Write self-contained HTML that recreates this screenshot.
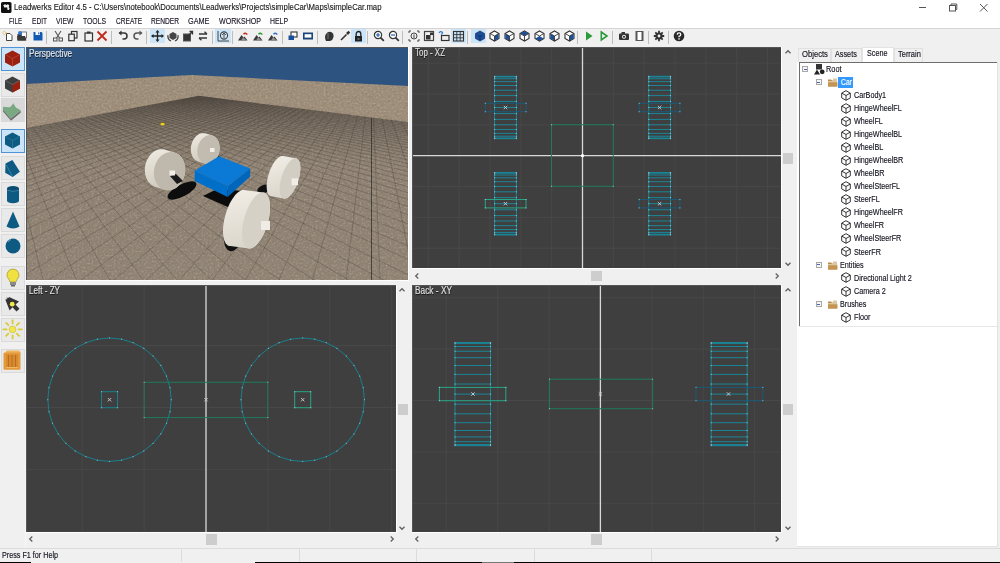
<!DOCTYPE html>
<html><head><meta charset="utf-8">
<style>
*{box-sizing:border-box}
html,body{margin:0;padding:0}
body{width:1000px;height:563px;position:relative;overflow:hidden;background:#f0f0f0;font-family:"Liberation Sans",sans-serif;color:#000}
.a{position:absolute}
.t{white-space:pre;transform-origin:0 0;-webkit-text-stroke:0.15px currentColor}
svg{display:block;overflow:hidden}
</style></head>
<body>
<div class="a" style="left:0;top:0;width:1000px;height:28px;background:#fff"></div>
<div class="a" style="left:0;top:28px;width:1000px;height:1px;background:#d5d5d5"></div>
<svg class="a" style="left:0;top:1px" width="13" height="13" viewBox="0 0 13 13">
<rect x="1" y="1" width="10.5" height="11" rx="1.6" fill="#111"/>
<path d="M3.2 4.2 L5 3.2 L6.6 4 L7.8 3.3 L9.2 4.3 L8.8 6.2 L9.6 7.6 L8.6 9.2 L7.2 8.6 L7.4 6.8 L6.2 6.2 L4.6 6.8 Z" fill="#f2f2f2"/>
</svg>
<div class="a" style="left:919px;top:7px;width:7px;height:1px;background:#555"></div>
<svg class="a" style="left:948px;top:3px" width="10" height="9" viewBox="0 0 10 9">
<rect x="1.5" y="2.5" width="6" height="5.5" fill="none" stroke="#555" stroke-width="1"/>
<path d="M3 2.5 V1 H8.8 V6.5 H7.5" fill="none" stroke="#555" stroke-width="1"/></svg>
<svg class="a" style="left:979px;top:3px" width="10" height="10" viewBox="0 0 10 10">
<path d="M1 1 L8.5 8.5 M8.5 1 L1 8.5" stroke="#555" stroke-width="1"/></svg>
<div class="a" style="left:0;top:29px;width:1000px;height:18px;background:#f0f0f0"></div>
<div class="a" style="left:46px;top:31px;width:1px;height:13px;background:#bdbdbd"></div>
<div class="a" style="left:111px;top:31px;width:1px;height:13px;background:#bdbdbd"></div>
<div class="a" style="left:146px;top:31px;width:1px;height:13px;background:#bdbdbd"></div>
<div class="a" style="left:212px;top:31px;width:1px;height:13px;background:#bdbdbd"></div>
<div class="a" style="left:232px;top:31px;width:1px;height:13px;background:#bdbdbd"></div>
<div class="a" style="left:282px;top:31px;width:1px;height:13px;background:#bdbdbd"></div>
<div class="a" style="left:317px;top:31px;width:1px;height:13px;background:#bdbdbd"></div>
<div class="a" style="left:367px;top:31px;width:1px;height:13px;background:#bdbdbd"></div>
<div class="a" style="left:402px;top:31px;width:1px;height:13px;background:#bdbdbd"></div>
<div class="a" style="left:467px;top:31px;width:1px;height:13px;background:#bdbdbd"></div>
<div class="a" style="left:577px;top:31px;width:1px;height:13px;background:#bdbdbd"></div>
<div class="a" style="left:612px;top:31px;width:1px;height:13px;background:#bdbdbd"></div>
<div class="a" style="left:648px;top:31px;width:1px;height:13px;background:#bdbdbd"></div>
<div class="a" style="left:668px;top:31px;width:1px;height:13px;background:#bdbdbd"></div>
<div class="a" style="left:150px;top:29px;width:15px;height:14px;background:#cce4f7"></div>
<div class="a" style="left:215px;top:29px;width:16px;height:14px;background:#cce4f7"></div>
<div class="a" style="left:351px;top:29px;width:15px;height:14px;background:#cce4f7"></div>
<div class="a" style="left:451px;top:29px;width:15px;height:14px;background:#cce4f7"></div>
<div class="a" style="left:471px;top:29px;width:15px;height:14px;background:#cce4f7"></div>
<svg class="a" style="left:2px;top:30px" width="12" height="12" viewBox="0 0 12 12"><path d="M4.5 3.5 H8 L10 5.5 V10.5 H4.5 Z" fill="#fff" stroke="#444" stroke-width="1"/><circle cx="2.5" cy="3" r="1.6" fill="none" stroke="#e8a040" stroke-width="1" stroke-dasharray="1 1"/></svg>
<svg class="a" style="left:16px;top:30px" width="12" height="12" viewBox="0 0 12 12"><rect x="1.5" y="4" width="8" height="6.5" fill="#333"/><rect x="5.5" y="2" width="5" height="6" fill="#fff" stroke="#555" stroke-width="0.8"/><path d="M1 6 H9 L10.5 10.5 H1.5 Z" fill="#3a3a3a"/><circle cx="4" cy="3" r="2" fill="#2f7ad0"/></svg>
<svg class="a" style="left:32px;top:30px" width="12" height="12" viewBox="0 0 12 12"><path d="M1.5 2 H9.5 L10.5 3 V10.5 H1.5 Z" fill="#1258b0"/><rect x="3.5" y="2" width="4.5" height="3" fill="#fff"/><rect x="6.2" y="2.4" width="1.2" height="2" fill="#1258b0"/></svg>
<svg class="a" style="left:52px;top:30px" width="12" height="12" viewBox="0 0 12 12"><path d="M3 1 L7.5 8 M9 1 L4.5 8" stroke="#555" stroke-width="1.1"/><rect x="1.5" y="8" width="3.5" height="3" fill="none" stroke="#555"/><rect x="7" y="8" width="3.5" height="3" fill="none" stroke="#555"/></svg>
<svg class="a" style="left:67px;top:30px" width="12" height="12" viewBox="0 0 12 12"><rect x="4.5" y="1.5" width="5.5" height="6.5" fill="none" stroke="#333" stroke-width="1.2"/><rect x="1.8" y="4.2" width="5.5" height="6.5" fill="#f0f0f0" stroke="#333" stroke-width="1.2"/></svg>
<svg class="a" style="left:83px;top:30px" width="12" height="12" viewBox="0 0 12 12"><rect x="2" y="3" width="7.5" height="8" fill="none" stroke="#333" stroke-width="1.2"/><rect x="4" y="1.5" width="3.5" height="2" fill="#333"/></svg>
<svg class="a" style="left:96px;top:30px" width="12" height="12" viewBox="0 0 12 12"><path d="M1.5 1.5 L10.5 10.5 M10.5 1.5 L1.5 10.5" stroke="#c0281a" stroke-width="1.8"/></svg>
<svg class="a" style="left:117px;top:30px" width="12" height="12" viewBox="0 0 12 12"><path d="M2.5 3 H7 A3 3 0 0 1 7 9 H5.5" fill="none" stroke="#333" stroke-width="1.5"/><path d="M1.5 3 L4.5 0.5 V5.5 Z" fill="#333"/></svg>
<svg class="a" style="left:132px;top:30px" width="12" height="12" viewBox="0 0 12 12"><path d="M9.5 3 H5 A3 3 0 0 0 5 9 H6.5" fill="none" stroke="#555" stroke-width="1.5"/><path d="M10.5 3 L7.5 0.5 V5.5 Z" fill="#555"/></svg>
<svg class="a" style="left:151px;top:30px" width="13" height="12" viewBox="0 0 13 12"><path d="M6.5 1 V11 M1.5 6 H11.5" stroke="#222" stroke-width="1.3"/><path d="M6.5 0 L4.5 2.5 H8.5 Z M6.5 12 L4.5 9.5 H8.5 Z M0 6 L2.5 4 V8 Z M13 6 L10.5 4 V8 Z" fill="#222"/></svg>
<svg class="a" style="left:167px;top:30px" width="12" height="12" viewBox="0 0 12 12"><path d="M6 2 L9.5 4 V8 L6 10 L2.5 8 V4 Z" fill="#444"/><path d="M1 5 A5.5 5.5 0 0 0 4 11 M11 5 A5.5 5.5 0 0 1 8 11" fill="none" stroke="#444" stroke-width="1.2"/></svg>
<svg class="a" style="left:182px;top:30px" width="12" height="12" viewBox="0 0 12 12"><rect x="1.5" y="4" width="7" height="7" fill="#333" stroke="#555"/><path d="M6 6 L10.5 1.5 M7.5 1.5 H10.5 V4.5" stroke="#333" stroke-width="1.3" fill="none"/></svg>
<svg class="a" style="left:197px;top:30px" width="12" height="12" viewBox="0 0 12 12"><path d="M2 4 H10 M10 8 H2" stroke="#333" stroke-width="1.3"/><path d="M10 4 L7.5 1.8 M2 8 L4.5 10.2" stroke="#333" stroke-width="1.3"/></svg>
<svg class="a" style="left:216px;top:30px" width="14" height="12" viewBox="0 0 14 12"><path d="M2 1 V11 H13" fill="none" stroke="#444" stroke-width="1"/><circle cx="8" cy="5.5" r="3.6" fill="none" stroke="#444" stroke-width="1.1"/><path d="M8 3 V8 M6 5 L8 3 L10 5" fill="none" stroke="#444" stroke-width="0.9"/></svg>
<svg class="a" style="left:237px;top:30px" width="12" height="12" viewBox="0 0 12 12"><path d="M1 10.5 L4.5 5 L6.5 7.5 L7.5 6.5 L10.5 10.5 Z" fill="#3a3a3a"/><path d="M4 10.5 L6.2 7 L9.5 10.5 Z" fill="#909090"/><path d="M6.5 4.2 Q8 2.5 9.8 4" fill="none" stroke="#d02818" stroke-width="1.4"/><path d="M10.8 4.6 L9.2 5 L9.8 3 Z" fill="#d02818"/></svg>
<svg class="a" style="left:252px;top:30px" width="12" height="12" viewBox="0 0 12 12"><path d="M1 10.5 L4.5 5 L6.5 7.5 L7.5 6.5 L10.5 10.5 Z" fill="#3a3a3a"/><path d="M4 10.5 L6.2 7 L9.5 10.5 Z" fill="#909090"/><path d="M6.5 4.2 Q8 2.5 9.8 4" fill="none" stroke="#2a9a2a" stroke-width="1.4"/><path d="M10.8 4.6 L9.2 5 L9.8 3 Z" fill="#2a9a2a"/></svg>
<svg class="a" style="left:267px;top:30px" width="12" height="12" viewBox="0 0 12 12"><path d="M1 10.5 L4.5 5 L6.5 7.5 L7.5 6.5 L10.5 10.5 Z" fill="#3a3a3a"/><path d="M4 10.5 L6.2 7 L9.5 10.5 Z" fill="#909090"/><path d="M6.5 4.2 Q8 2.5 9.8 4" fill="none" stroke="#2f70c0" stroke-width="1.4"/><path d="M10.8 4.6 L9.2 5 L9.8 3 Z" fill="#2f70c0"/></svg>
<svg class="a" style="left:287px;top:30px" width="12" height="12" viewBox="0 0 12 12"><rect x="4" y="2" width="6" height="5" fill="#fff" stroke="#333" stroke-width="1.1"/><rect x="1.5" y="5.5" width="5.5" height="4.5" fill="#1c4f9a"/></svg>
<svg class="a" style="left:302px;top:30px" width="12" height="12" viewBox="0 0 12 12"><rect x="1" y="2.5" width="10" height="7" fill="#1a4378"/><rect x="2.6" y="4.2" width="6.8" height="3.4" fill="#fff"/></svg>
<svg class="a" style="left:323px;top:30px" width="12" height="12" viewBox="0 0 12 12"><path d="M3 11 Q1 7 3 4 Q5 1 8 2 Q11 3 10.5 7 Q10 10 7 11 Z" fill="#333"/><path d="M5 3 V9" stroke="#777" stroke-width="1"/></svg>
<svg class="a" style="left:339px;top:30px" width="12" height="12" viewBox="0 0 12 12"><path d="M2 10 L7.5 4.5" stroke="#333" stroke-width="1.6"/><path d="M7 3 L9.5 0.8 L11.2 2.5 L9 5 Z" fill="#333"/></svg>
<svg class="a" style="left:352px;top:30px" width="13" height="12" viewBox="0 0 13 12"><path d="M4.2 6 V3.8 A2.3 2.3 0 0 1 8.8 3.8 V6" fill="none" stroke="#222" stroke-width="1.3"/><rect x="3" y="6" width="7" height="5.5" fill="#222"/><rect x="5.5" y="8" width="2" height="2" fill="#666"/></svg>
<svg class="a" style="left:373px;top:30px" width="12" height="12" viewBox="0 0 12 12"><circle cx="5" cy="5" r="3.6" fill="#fff" stroke="#333" stroke-width="1.2"/><path d="M7.6 7.6 L10.8 10.8" stroke="#333" stroke-width="1.8"/><path d="M3 5 H7 M5 3 V7" stroke="#1c5fb0" stroke-width="1.2"/></svg>
<svg class="a" style="left:388px;top:30px" width="12" height="12" viewBox="0 0 12 12"><circle cx="5" cy="5" r="3.6" fill="#fff" stroke="#333" stroke-width="1.2"/><path d="M7.6 7.6 L10.8 10.8" stroke="#333" stroke-width="1.8"/><path d="M3 5 H7" stroke="#1c5fb0" stroke-width="1.2"/></svg>
<svg class="a" style="left:408px;top:30px" width="12" height="12" viewBox="0 0 12 12"><path d="M1 3 V1 H3 M9 1 H11 V3 M11 9 V11 H9 M3 11 H1 V9" fill="none" stroke="#444" stroke-width="1"/><circle cx="6" cy="6" r="3" fill="none" stroke="#444"/><path d="M6 4.5 V8" stroke="#444"/></svg>
<svg class="a" style="left:423px;top:30px" width="12" height="12" viewBox="0 0 12 12"><rect x="1.5" y="1.5" width="9" height="9" fill="none" stroke="#444" stroke-width="1.2"/><rect x="3" y="5" width="4.5" height="4.5" fill="#333"/><rect x="7" y="2.5" width="3" height="2.5" fill="#333"/></svg>
<svg class="a" style="left:438px;top:30px" width="12" height="12" viewBox="0 0 12 12"><rect x="3.5" y="5.5" width="7.5" height="5" fill="none" stroke="#333" stroke-width="1.2"/><path d="M1 3 Q2.5 0.5 4.5 2.5 Q4.5 4 3 4.5" fill="none" stroke="#2f7ad0" stroke-width="1.2"/></svg>
<svg class="a" style="left:452px;top:30px" width="13" height="12" viewBox="0 0 13 12"><rect x="1.5" y="1.5" width="10" height="9.5" fill="none" stroke="#333" stroke-width="1.1"/><path d="M4.8 1.5 V11 M8.2 1.5 V11 M1.5 4.6 H11.5 M1.5 7.8 H11.5" stroke="#333" stroke-width="0.9"/></svg>
<svg class="a" style="left:474px;top:30px" width="12" height="12" viewBox="0 0 12 12"><path d="M6 1 L10.5 3.5 V8.5 L6 11 L1.5 8.5 V3.5 Z" fill="#1c4f9a" stroke="#1a3a70" stroke-width="0.8"/><path d="M6 6.5 V10 M3.5 5 L6 6.5 L8.5 5" stroke="#0c2a5a" stroke-width="0.8" fill="none"/></svg>
<svg class="a" style="left:489px;top:30px" width="11" height="12" viewBox="0 0 11 12"><path d="M5.5 1 L10 3.5 V8.5 L5.5 11 L1 8.5 V3.5 Z" fill="#fff" stroke="#333" stroke-width="1.1"/><path d="M9.6 3.8 L5.7 6.1 V10.6 L9.6 8.4 Z" fill="#1c4f9a"/><path d="M1.2 3.6 L5.5 6 L9.8 3.6 M5.5 6 V11" fill="none" stroke="#333" stroke-width="0.9"/></svg>
<svg class="a" style="left:504px;top:30px" width="11" height="12" viewBox="0 0 11 12"><path d="M5.5 1 L10 3.5 V8.5 L5.5 11 L1 8.5 V3.5 Z" fill="#fff" stroke="#333" stroke-width="1.1"/><path d="M1.4 3.8 L5.3 6.1 V10.6 L1.4 8.4 Z" fill="#1c4f9a"/><path d="M1.2 3.6 L5.5 6 L9.8 3.6 M5.5 6 V11" fill="none" stroke="#333" stroke-width="0.9"/></svg>
<svg class="a" style="left:519px;top:30px" width="11" height="12" viewBox="0 0 11 12"><path d="M5.5 1 L10 3.5 V8.5 L5.5 11 L1 8.5 V3.5 Z" fill="#fff" stroke="#333" stroke-width="1.1"/><path d="M5.5 1.3 L9.6 3.6 L5.5 6 L1.4 3.6 Z" fill="#1c4f9a"/><path d="M1.2 3.6 L5.5 6 L9.8 3.6 M5.5 6 V11" fill="none" stroke="#333" stroke-width="0.9"/></svg>
<svg class="a" style="left:534px;top:30px" width="11" height="12" viewBox="0 0 11 12"><path d="M5.5 1 L10 3.5 V8.5 L5.5 11 L1 8.5 V3.5 Z" fill="#fff" stroke="#333" stroke-width="1.1"/><path d="M1.2 3.6 L5.5 6 L9.8 3.6 M5.5 6 V11" fill="none" stroke="#333" stroke-width="0.9"/></svg>
<svg class="a" style="left:534px;top:30px" width="11" height="12" viewBox="0 0 11 12"><path d="M1.4 8.4 L5.5 6.1 L9.6 8.4 L5.5 10.7 Z" fill="#1c4f9a"/></svg>
<svg class="a" style="left:549px;top:30px" width="11" height="12" viewBox="0 0 11 12"><path d="M5.5 1 L10 3.5 V8.5 L5.5 11 L1 8.5 V3.5 Z" fill="#fff" stroke="#333" stroke-width="1.1"/><path d="M1.4 3.8 L5.3 6.1 V10.6 L1.4 8.4 Z" fill="#1c4f9a"/><path d="M1.2 3.6 L5.5 6 L9.8 3.6 M5.5 6 V11" fill="none" stroke="#333" stroke-width="0.9"/></svg>
<svg class="a" style="left:564px;top:30px" width="11" height="12" viewBox="0 0 11 12"><path d="M5.5 1 L10 3.5 V8.5 L5.5 11 L1 8.5 V3.5 Z" fill="#fff" stroke="#333" stroke-width="1.1"/><path d="M9.6 3.8 L5.7 6.1 V10.6 L9.6 8.4 Z" fill="#1c4f9a"/><path d="M1.2 3.6 L5.5 6 L9.8 3.6 M5.5 6 V11" fill="none" stroke="#333" stroke-width="0.9"/></svg>
<svg class="a" style="left:584px;top:30px" width="10" height="12" viewBox="0 0 10 12"><path d="M2 1.5 L8.5 6 L2 10.5 Z" fill="#2a9a3a"/></svg>
<svg class="a" style="left:599px;top:30px" width="10" height="12" viewBox="0 0 10 12"><path d="M2.3 2 L8 6 L2.3 10 Z" fill="none" stroke="#2a9a3a" stroke-width="1.6"/></svg>
<svg class="a" style="left:618px;top:30px" width="12" height="12" viewBox="0 0 12 12"><rect x="1" y="3.5" width="10" height="6.5" rx="1" fill="#333"/><rect x="3.5" y="2" width="3.5" height="2" fill="#333"/><circle cx="6" cy="6.8" r="2" fill="#f0f0f0"/><circle cx="6" cy="6.8" r="1.1" fill="#333"/></svg>
<svg class="a" style="left:634px;top:30px" width="12" height="12" viewBox="0 0 12 12"><rect x="1.5" y="1" width="8" height="10" fill="#555"/><rect x="3.5" y="2" width="4" height="8" fill="#fff"/></svg>
<svg class="a" style="left:653px;top:30px" width="12" height="12" viewBox="0 0 12 12"><circle cx="6" cy="6" r="3.6" fill="#333"/><path d="M6 0.8 V11.2 M0.8 6 H11.2 M2.3 2.3 L9.7 9.7 M9.7 2.3 L2.3 9.7" stroke="#333" stroke-width="1.8"/><circle cx="6" cy="6" r="1.4" fill="#f0f0f0"/></svg>
<svg class="a" style="left:673px;top:30px" width="12" height="12" viewBox="0 0 12 12"><circle cx="6" cy="6" r="5.3" fill="#2a2a2a"/><path d="M4.2 4.6 Q4.3 2.8 6 2.8 Q7.8 2.8 7.8 4.4 Q7.8 5.6 6 6.3 V7.3" fill="none" stroke="#fff" stroke-width="1.3"/><rect x="5.3" y="8.2" width="1.4" height="1.4" fill="#fff"/></svg>
<div class="a" style="left:25px;top:47px;width:1px;height:501px;background:#f6f6f6"></div>
<div class="a" style="left:1px;top:47px;width:24px;height:24px;background:#cce4f7;border:1px solid #4f93d6"></div>
<div class="a" style="left:1px;top:73px;width:24px;height:24px;background:#e9e9e9;border:1px solid #dadada"></div>
<div class="a" style="left:1px;top:98px;width:24px;height:24px;background:#d9d9d9;border:1px solid #d9d9d9"></div>
<div class="a" style="left:1px;top:129px;width:24px;height:24px;background:#cce4f7;border:1px solid #4f93d6"></div>
<div class="a" style="left:1px;top:156px;width:24px;height:24px;background:#e9e9e9;border:1px solid #dadada"></div>
<div class="a" style="left:1px;top:182px;width:24px;height:24px;background:#e9e9e9;border:1px solid #dadada"></div>
<div class="a" style="left:1px;top:208px;width:24px;height:24px;background:#e9e9e9;border:1px solid #dadada"></div>
<div class="a" style="left:1px;top:234px;width:24px;height:24px;background:#e9e9e9;border:1px solid #dadada"></div>
<div class="a" style="left:1px;top:266px;width:24px;height:24px;background:#e9e9e9;border:1px solid #dadada"></div>
<div class="a" style="left:1px;top:292px;width:24px;height:24px;background:#e9e9e9;border:1px solid #dadada"></div>
<div class="a" style="left:1px;top:318px;width:24px;height:24px;background:#e9e9e9;border:1px solid #dadada"></div>
<div class="a" style="left:1px;top:349px;width:24px;height:24px;background:#e9e9e9;border:1px solid #dadada"></div>
<svg class="a" style="left:1px;top:47px" width="24" height="24" viewBox="0 0 24 24"><path d="M11.5 3.5 L19 7.5 V15.5 L11.5 19.5 L4 15.5 V7.5 Z" fill="#9b2010"/><path d="M4.5 7.7 L11.5 11.5 L18.5 7.7 M11.5 11.5 V19" fill="none" stroke="#c05a48" stroke-width="0.6"/></svg>
<svg class="a" style="left:1px;top:73px" width="24" height="24" viewBox="0 0 24 24"><path d="M11.5 3.5 L19 7.5 V15.5 L11.5 19.5 L4 15.5 V7.5 Z" fill="#3e3e3e"/><path d="M11.5 11.5 L19 7.5 V15.5 L11.5 19.5 Z" fill="#9b2010"/><path d="M4.5 7.7 L11.5 11.5 L18.5 7.7" fill="none" stroke="#777" stroke-width="0.6"/></svg>
<svg class="a" style="left:1px;top:98px" width="24" height="24" viewBox="0 0 24 24"><path d="M2 11 L9.7 20.5 L19.6 12.4 L19.8 14.5 L10 22.8 L2 13.5 Z" fill="#6e6e6e"/><path d="M2 8.8 Q6 9.5 9 9.2 Q11 7.5 12.4 5.3 Q14 9 15.5 10 Q18 11 19.6 12.4 L9.7 20.5 L2 12 Z" fill="#7aa883"/></svg>
<svg class="a" style="left:1px;top:129px" width="24" height="24" viewBox="0 0 24 24"><path d="M11.5 3.5 L19 7.5 V15.5 L11.5 19.5 L4 15.5 V7.5 Z" fill="#0d5a82"/><path d="M4.5 7.7 L11.5 11.5 L18.5 7.7 M11.5 11.5 V19" fill="none" stroke="#3b7fa5" stroke-width="0.6"/></svg>
<svg class="a" style="left:1px;top:156px" width="24" height="24" viewBox="0 0 24 24"><path d="M11.4 4 L18.9 15.7 L11.7 20.9 L4.2 16.7 L4.5 7.5 Z" fill="#0d5a82"/><path d="M5.3 9 L11.3 20" stroke="#4b8fb0" stroke-width="0.7"/></svg>
<svg class="a" style="left:1px;top:182px" width="24" height="24" viewBox="0 0 24 24"><ellipse cx="12" cy="18.8" rx="6" ry="2.4" fill="#0d5a82"/><rect x="6" y="6.5" width="12" height="12.3" fill="#0d5a82"/><ellipse cx="12" cy="6.5" rx="6" ry="2.6" fill="#0a4d70"/><path d="M6.3 8.2 Q12 10.5 17.7 8.2" fill="none" stroke="#5a9ac0" stroke-width="0.6"/></svg>
<svg class="a" style="left:1px;top:208px" width="24" height="24" viewBox="0 0 24 24"><path d="M12 3.5 L18.5 18.5 Q12 22.5 5.5 18.5 Z" fill="#0d5a82"/></svg>
<svg class="a" style="left:1px;top:234px" width="24" height="24" viewBox="0 0 24 24"><circle cx="12" cy="12" r="7.5" fill="#0d5a82"/><path d="M7 8 Q8 6 10 5.5" stroke="#8ab8d8" stroke-width="0.8" fill="none"/></svg>
<svg class="a" style="left:1px;top:266px" width="24" height="24" viewBox="0 0 24 24"><path d="M12 3 A6 6 0 0 1 16 13.5 L15 16 H9 L8 13.5 A6 6 0 0 1 12 3 Z" fill="#f0e040" stroke="#9a8a20" stroke-width="0.6"/><rect x="9" y="16" width="6" height="3" fill="#8a8a8a"/><rect x="10" y="19" width="4" height="1.5" fill="#666"/></svg>
<svg class="a" style="left:1px;top:292px" width="24" height="24" viewBox="0 0 24 24"><path d="M4.5 8 Q5 4.5 8 5 L18 9.6 L14.5 12.5 L18.5 16.8 L15.5 19.6 L11.5 15.2 L8.6 18.5 Z" fill="#333"/><circle cx="11.2" cy="12.2" r="2.4" fill="#f2e64a"/><path d="M5 7.5 Q5.5 5.2 7.8 5.4" stroke="#e8e8e8" stroke-width="0.9" fill="none"/></svg>
<svg class="a" style="left:1px;top:318px" width="24" height="24" viewBox="0 0 24 24"><circle cx="11.6" cy="11.4" r="3.4" fill="#f2e64a" stroke="#b0a030" stroke-width="0.4"/><line x1="17.6" y1="11.4" x2="20.8" y2="11.4" stroke="#d8cc3a" stroke-width="1.8" stroke-linecap="round"/><line x1="15.8" y1="15.6" x2="18.1" y2="17.9" stroke="#d8cc3a" stroke-width="1.8" stroke-linecap="round"/><line x1="11.6" y1="17.4" x2="11.6" y2="20.6" stroke="#d8cc3a" stroke-width="1.8" stroke-linecap="round"/><line x1="7.4" y1="15.6" x2="5.1" y2="17.9" stroke="#d8cc3a" stroke-width="1.8" stroke-linecap="round"/><line x1="5.6" y1="11.4" x2="2.4" y2="11.4" stroke="#d8cc3a" stroke-width="1.8" stroke-linecap="round"/><line x1="7.4" y1="7.2" x2="5.1" y2="4.9" stroke="#d8cc3a" stroke-width="1.8" stroke-linecap="round"/><line x1="11.6" y1="5.4" x2="11.6" y2="2.2" stroke="#d8cc3a" stroke-width="1.8" stroke-linecap="round"/><line x1="15.8" y1="7.2" x2="18.1" y2="4.9" stroke="#d8cc3a" stroke-width="1.8" stroke-linecap="round"/></svg>
<svg class="a" style="left:1px;top:349px" width="24" height="24" viewBox="0 0 24 24"><path d="M4.5 3.5 L6 1.8 H18 L19.5 3.5 V19.5 Q19.5 20.8 18.2 20.8 H3.8 Q2.5 20.8 2.5 19.5 V4.5 Q2.5 3.5 4.5 3.5 Z" fill="#e39a3c"/><path d="M4.5 3.5 L6 1.8 H18 L19.5 3.5 Z" fill="#f0b55a"/><rect x="5" y="5.5" width="12" height="13" fill="#d88a2e"/><path d="M7.5 6 V18 M11 6 V18 M14.5 6 V18" stroke="#b86e1e" stroke-width="1"/><path d="M5 18.5 H17" stroke="#f5c070" stroke-width="0.8"/></svg>
<svg class="a" style="left:26px;top:47px" width="382" height="233" viewBox="0 0 382 233"><rect width="382" height="233" fill="#2d5381"/><linearGradient id="fdk" x1="0" y1="0" x2="0" y2="1"><stop offset="0" stop-color="#2a2520" stop-opacity="0.3"/><stop offset="1" stop-color="#2a2520" stop-opacity="0"/></linearGradient><linearGradient id="trd" x1="0" y1="0" x2="0.3" y2="1"><stop offset="0" stop-color="#f0ece3"/><stop offset="1" stop-color="#cfc9bd"/></linearGradient><linearGradient id="trd2" x1="0" y1="0" x2="0.2" y2="1"><stop offset="0" stop-color="#f2eee6"/><stop offset="1" stop-color="#dcd7cd"/></linearGradient><polygon points="0.0,37.0 166.0,28.0 382.0,39.0 382.0,233.0 0.0,233.0" fill="#9f8e79" /><polygon points="0.0,81.0 173.0,48.8 382.0,75.0 382.0,233.0 0.0,233.0" fill="#908373" /><clipPath id="flc"><polygon points="0.0,81.0 173.0,48.8 382.0,75.0 382.0,233.0 0.0,233.0"/></clipPath><filter id="nzd" x="0" y="0" width="100%" height="100%"><feTurbulence type="fractalNoise" baseFrequency="0.45" numOctaves="3" seed="7"/><feColorMatrix type="matrix" values="0 0 0 0 0.2  0 0 0 0 0.17  0 0 0 0 0.14  2.2 0 0 0 -1.0"/></filter><filter id="nzl" x="0" y="0" width="100%" height="100%"><feTurbulence type="fractalNoise" baseFrequency="0.5" numOctaves="3" seed="11"/><feColorMatrix type="matrix" values="0 0 0 0 0.75  0 0 0 0 0.71  0 0 0 0 0.64  -2.2 0 0 0 1.2"/></filter><clipPath id="gnd"><polygon points="0,37 166,28 382,39 382,233 0,233"/></clipPath><g clip-path="url(#gnd)"><rect x="0" y="26" width="382" height="207" filter="url(#nzd)" opacity="0.5"/><rect x="0" y="26" width="382" height="207" filter="url(#nzl)" opacity="0.3"/></g><g clip-path="url(#flc)"><line x1="173.00" y1="48.80" x2="-8279.50" y2="1607.00" stroke="#2a2622" stroke-opacity="0.32" stroke-width="0.7"/><line x1="173.00" y1="48.80" x2="10379.70" y2="1317.90" stroke="#2a2622" stroke-opacity="0.32" stroke-width="0.7"/><line x1="175.53" y1="49.11" x2="-8051.02" y2="1603.46" stroke="#2a2622" stroke-opacity="0.32" stroke-width="0.7"/><line x1="170.90" y1="49.19" x2="10151.22" y2="1321.44" stroke="#2a2622" stroke-opacity="0.32" stroke-width="0.7"/><line x1="178.12" y1="49.44" x2="-7822.54" y2="1599.92" stroke="#2a2622" stroke-opacity="0.32" stroke-width="0.7"/><line x1="168.76" y1="49.58" x2="9922.74" y2="1324.98" stroke="#2a2622" stroke-opacity="0.32" stroke-width="0.7"/><line x1="180.78" y1="49.77" x2="-7594.06" y2="1596.38" stroke="#2a2622" stroke-opacity="0.32" stroke-width="0.7"/><line x1="166.56" y1="49.99" x2="9694.26" y2="1328.52" stroke="#2a2622" stroke-opacity="0.32" stroke-width="0.7"/><line x1="183.50" y1="50.11" x2="-7365.58" y2="1592.84" stroke="#2a2622" stroke-opacity="0.32" stroke-width="0.7"/><line x1="164.30" y1="50.40" x2="9465.78" y2="1332.06" stroke="#2a2622" stroke-opacity="0.32" stroke-width="0.7"/><line x1="186.30" y1="50.45" x2="-7137.10" y2="1589.30" stroke="#2a2622" stroke-opacity="0.32" stroke-width="0.7"/><line x1="161.99" y1="50.83" x2="9237.30" y2="1335.60" stroke="#2a2622" stroke-opacity="0.32" stroke-width="0.7"/><line x1="189.16" y1="50.81" x2="-6908.62" y2="1585.76" stroke="#2a2622" stroke-opacity="0.32" stroke-width="0.7"/><line x1="159.62" y1="51.27" x2="9008.82" y2="1339.14" stroke="#2a2622" stroke-opacity="0.32" stroke-width="0.7"/><line x1="192.10" y1="51.18" x2="-6680.14" y2="1582.22" stroke="#2a2622" stroke-opacity="0.32" stroke-width="0.7"/><line x1="157.18" y1="51.72" x2="8780.34" y2="1342.68" stroke="#2a2622" stroke-opacity="0.32" stroke-width="0.7"/><line x1="195.12" y1="51.55" x2="-6451.66" y2="1578.68" stroke="#2a2622" stroke-opacity="0.32" stroke-width="0.7"/><line x1="154.68" y1="52.18" x2="8551.86" y2="1346.22" stroke="#2a2622" stroke-opacity="0.32" stroke-width="0.7"/><line x1="198.22" y1="51.94" x2="-6223.18" y2="1575.14" stroke="#2a2622" stroke-opacity="0.32" stroke-width="0.7"/><line x1="152.11" y1="52.65" x2="8323.38" y2="1349.76" stroke="#2a2622" stroke-opacity="0.32" stroke-width="0.7"/><line x1="201.40" y1="52.33" x2="-5994.70" y2="1571.60" stroke="#2a2622" stroke-opacity="0.32" stroke-width="0.7"/><line x1="149.48" y1="53.14" x2="8094.90" y2="1353.30" stroke="#2a2622" stroke-opacity="0.32" stroke-width="0.7"/><line x1="204.68" y1="52.74" x2="-5766.22" y2="1568.06" stroke="#2a2622" stroke-opacity="0.32" stroke-width="0.7"/><line x1="146.77" y1="53.64" x2="7866.42" y2="1356.84" stroke="#2a2622" stroke-opacity="0.32" stroke-width="0.7"/><line x1="208.04" y1="53.16" x2="-5537.74" y2="1564.52" stroke="#2a2622" stroke-opacity="0.32" stroke-width="0.7"/><line x1="143.98" y1="54.15" x2="7637.94" y2="1360.38" stroke="#2a2622" stroke-opacity="0.32" stroke-width="0.7"/><line x1="211.50" y1="53.59" x2="-5309.26" y2="1560.98" stroke="#2a2622" stroke-opacity="0.32" stroke-width="0.7"/><line x1="141.12" y1="54.68" x2="7409.46" y2="1363.92" stroke="#2a2622" stroke-opacity="0.32" stroke-width="0.7"/><line x1="215.06" y1="54.03" x2="-5080.78" y2="1557.44" stroke="#2a2622" stroke-opacity="0.32" stroke-width="0.7"/><line x1="138.17" y1="55.22" x2="7180.98" y2="1367.46" stroke="#2a2622" stroke-opacity="0.32" stroke-width="0.7"/><line x1="218.72" y1="54.49" x2="-4852.30" y2="1553.90" stroke="#2a2622" stroke-opacity="0.32" stroke-width="0.7"/><line x1="135.13" y1="55.78" x2="6952.50" y2="1371.00" stroke="#2a2622" stroke-opacity="0.32" stroke-width="0.7"/><line x1="222.50" y1="54.95" x2="-4623.82" y2="1550.36" stroke="#2a2622" stroke-opacity="0.32" stroke-width="0.7"/><line x1="132.01" y1="56.36" x2="6724.02" y2="1374.54" stroke="#2a2622" stroke-opacity="0.32" stroke-width="0.7"/><line x1="226.38" y1="55.44" x2="-4395.34" y2="1546.82" stroke="#2a2622" stroke-opacity="0.32" stroke-width="0.7"/><line x1="128.79" y1="56.95" x2="6495.54" y2="1378.08" stroke="#2a2622" stroke-opacity="0.32" stroke-width="0.7"/><line x1="230.39" y1="55.94" x2="-4166.86" y2="1543.28" stroke="#2a2622" stroke-opacity="0.32" stroke-width="0.7"/><line x1="125.47" y1="57.56" x2="6267.06" y2="1381.62" stroke="#2a2622" stroke-opacity="0.32" stroke-width="0.7"/><line x1="234.52" y1="56.45" x2="-3938.38" y2="1539.74" stroke="#2a2622" stroke-opacity="0.32" stroke-width="0.7"/><line x1="122.05" y1="58.19" x2="6038.58" y2="1385.16" stroke="#2a2622" stroke-opacity="0.32" stroke-width="0.7"/><line x1="238.78" y1="56.98" x2="-3709.90" y2="1536.20" stroke="#2a2622" stroke-opacity="0.32" stroke-width="0.7"/><line x1="118.53" y1="58.84" x2="5810.10" y2="1388.70" stroke="#2a2622" stroke-opacity="0.32" stroke-width="0.7"/><line x1="243.18" y1="57.53" x2="-3481.42" y2="1532.66" stroke="#2a2622" stroke-opacity="0.32" stroke-width="0.7"/><line x1="114.89" y1="59.51" x2="5581.62" y2="1392.24" stroke="#2a2622" stroke-opacity="0.32" stroke-width="0.7"/><line x1="247.72" y1="58.09" x2="-3252.94" y2="1529.12" stroke="#2a2622" stroke-opacity="0.32" stroke-width="0.7"/><line x1="111.12" y1="60.21" x2="5353.14" y2="1395.78" stroke="#2a2622" stroke-opacity="0.32" stroke-width="0.7"/><line x1="252.41" y1="58.67" x2="-3024.46" y2="1525.58" stroke="#2a2622" stroke-opacity="0.32" stroke-width="0.7"/><line x1="107.24" y1="60.92" x2="5124.66" y2="1399.32" stroke="#2a2622" stroke-opacity="0.32" stroke-width="0.7"/><line x1="257.26" y1="59.28" x2="-2795.98" y2="1522.04" stroke="#2a2622" stroke-opacity="0.32" stroke-width="0.7"/><line x1="103.22" y1="61.66" x2="4896.18" y2="1402.86" stroke="#2a2622" stroke-opacity="0.32" stroke-width="0.7"/><line x1="262.27" y1="59.90" x2="-2567.50" y2="1518.50" stroke="#2a2622" stroke-opacity="0.32" stroke-width="0.7"/><line x1="99.07" y1="62.43" x2="4667.70" y2="1406.40" stroke="#2a2622" stroke-opacity="0.32" stroke-width="0.7"/><line x1="267.46" y1="60.55" x2="-2339.02" y2="1514.96" stroke="#2a2622" stroke-opacity="0.32" stroke-width="0.7"/><line x1="94.77" y1="63.22" x2="4439.22" y2="1409.94" stroke="#2a2622" stroke-opacity="0.32" stroke-width="0.7"/><line x1="272.84" y1="61.21" x2="-2110.54" y2="1511.42" stroke="#2a2622" stroke-opacity="0.32" stroke-width="0.7"/><line x1="90.32" y1="64.04" x2="4210.74" y2="1413.48" stroke="#2a2622" stroke-opacity="0.32" stroke-width="0.7"/><line x1="278.40" y1="61.91" x2="-1882.06" y2="1507.88" stroke="#2a2622" stroke-opacity="0.32" stroke-width="0.7"/><line x1="85.71" y1="64.89" x2="3982.26" y2="1417.02" stroke="#2a2622" stroke-opacity="0.32" stroke-width="0.7"/><line x1="284.18" y1="62.62" x2="-1653.58" y2="1504.34" stroke="#2a2622" stroke-opacity="0.32" stroke-width="0.7"/><line x1="80.93" y1="65.77" x2="3753.78" y2="1420.56" stroke="#2a2622" stroke-opacity="0.32" stroke-width="0.7"/><line x1="290.17" y1="63.37" x2="-1425.10" y2="1500.80" stroke="#2a2622" stroke-opacity="0.32" stroke-width="0.7"/><line x1="75.97" y1="66.69" x2="3525.30" y2="1424.10" stroke="#2a2622" stroke-opacity="0.32" stroke-width="0.7"/><line x1="296.39" y1="64.14" x2="-1196.62" y2="1497.26" stroke="#2a2622" stroke-opacity="0.32" stroke-width="0.7"/><line x1="70.82" y1="67.64" x2="3296.82" y2="1427.64" stroke="#2a2622" stroke-opacity="0.32" stroke-width="0.7"/><line x1="302.85" y1="64.95" x2="-968.14" y2="1493.72" stroke="#2a2622" stroke-opacity="0.32" stroke-width="0.7"/><line x1="65.47" y1="68.62" x2="3068.34" y2="1431.18" stroke="#2a2622" stroke-opacity="0.32" stroke-width="0.7"/><line x1="309.57" y1="65.78" x2="-739.66" y2="1490.18" stroke="#2a2622" stroke-opacity="0.32" stroke-width="0.7"/><line x1="59.90" y1="69.65" x2="2839.86" y2="1434.72" stroke="#2a2622" stroke-opacity="0.32" stroke-width="0.7"/><line x1="316.56" y1="66.65" x2="-511.18" y2="1486.64" stroke="#2a2622" stroke-opacity="0.32" stroke-width="0.7"/><line x1="54.11" y1="70.72" x2="2611.38" y2="1438.26" stroke="#2a2622" stroke-opacity="0.32" stroke-width="0.7"/><line x1="323.84" y1="67.56" x2="-282.70" y2="1483.10" stroke="#2a2622" stroke-opacity="0.32" stroke-width="0.7"/><line x1="48.09" y1="71.83" x2="2382.90" y2="1441.80" stroke="#2a2622" stroke-opacity="0.32" stroke-width="0.7"/><line x1="331.43" y1="68.50" x2="-54.22" y2="1479.56" stroke="#2a2622" stroke-opacity="0.32" stroke-width="0.7"/><line x1="41.80" y1="72.99" x2="2154.42" y2="1445.34" stroke="#2a2622" stroke-opacity="0.32" stroke-width="0.7"/><line x1="339.34" y1="69.48" x2="174.26" y2="1476.02" stroke="#2a2622" stroke-opacity="0.32" stroke-width="0.7"/><line x1="35.25" y1="74.19" x2="1925.94" y2="1448.88" stroke="#2a2622" stroke-opacity="0.32" stroke-width="0.7"/><line x1="347.60" y1="70.51" x2="402.74" y2="1472.48" stroke="#2a2622" stroke-opacity="0.32" stroke-width="0.7"/><line x1="28.40" y1="75.46" x2="1697.46" y2="1452.42" stroke="#2a2622" stroke-opacity="0.32" stroke-width="0.7"/><line x1="356.24" y1="71.58" x2="631.22" y2="1468.94" stroke="#2a2622" stroke-opacity="0.32" stroke-width="0.7"/><line x1="21.25" y1="76.77" x2="1468.98" y2="1455.96" stroke="#2a2622" stroke-opacity="0.32" stroke-width="0.7"/><line x1="365.28" y1="72.71" x2="859.70" y2="1465.40" stroke="#2a2622" stroke-opacity="0.32" stroke-width="0.7"/><line x1="13.77" y1="78.15" x2="1240.50" y2="1459.50" stroke="#2a2622" stroke-opacity="0.32" stroke-width="0.7"/><line x1="374.74" y1="73.88" x2="1088.18" y2="1461.86" stroke="#2a2622" stroke-opacity="0.32" stroke-width="0.7"/><line x1="5.93" y1="79.60" x2="1012.02" y2="1463.04" stroke="#2a2622" stroke-opacity="0.32" stroke-width="0.7"/><line x1="384.66" y1="75.12" x2="1316.66" y2="1458.32" stroke="#2a2622" stroke-opacity="0.32" stroke-width="0.7"/><line x1="-2.28" y1="81.11" x2="783.54" y2="1466.58" stroke="#2a2622" stroke-opacity="0.32" stroke-width="0.7"/><line x1="395.07" y1="76.41" x2="1545.14" y2="1454.78" stroke="#2a2622" stroke-opacity="0.32" stroke-width="0.7"/><line x1="-10.90" y1="82.70" x2="555.06" y2="1470.12" stroke="#2a2622" stroke-opacity="0.32" stroke-width="0.7"/><line x1="406.01" y1="77.77" x2="1773.62" y2="1451.24" stroke="#2a2622" stroke-opacity="0.32" stroke-width="0.7"/><line x1="-19.97" y1="84.37" x2="326.58" y2="1473.66" stroke="#2a2622" stroke-opacity="0.32" stroke-width="0.7"/><line x1="417.53" y1="79.20" x2="2002.10" y2="1447.70" stroke="#2a2622" stroke-opacity="0.32" stroke-width="0.7"/><line x1="-29.50" y1="86.13" x2="98.10" y2="1477.20" stroke="#2a2622" stroke-opacity="0.32" stroke-width="0.7"/><line x1="429.66" y1="80.71" x2="2230.58" y2="1444.16" stroke="#2a2622" stroke-opacity="0.32" stroke-width="0.7"/><line x1="-39.54" y1="87.98" x2="-130.38" y2="1480.74" stroke="#2a2622" stroke-opacity="0.32" stroke-width="0.7"/><line x1="442.45" y1="82.30" x2="2459.06" y2="1440.62" stroke="#2a2622" stroke-opacity="0.32" stroke-width="0.7"/><line x1="-50.14" y1="89.94" x2="-358.86" y2="1484.28" stroke="#2a2622" stroke-opacity="0.32" stroke-width="0.7"/><line x1="455.97" y1="83.98" x2="2687.54" y2="1437.08" stroke="#2a2622" stroke-opacity="0.32" stroke-width="0.7"/><line x1="-61.34" y1="92.00" x2="-587.34" y2="1487.82" stroke="#2a2622" stroke-opacity="0.32" stroke-width="0.7"/><line x1="470.28" y1="85.76" x2="2916.02" y2="1433.54" stroke="#2a2622" stroke-opacity="0.32" stroke-width="0.7"/><line x1="-73.19" y1="94.18" x2="-815.82" y2="1491.36" stroke="#2a2622" stroke-opacity="0.32" stroke-width="0.7"/><line x1="485.45" y1="87.65" x2="3144.50" y2="1430.00" stroke="#2a2622" stroke-opacity="0.32" stroke-width="0.7"/><line x1="-85.75" y1="96.50" x2="-1044.30" y2="1494.90" stroke="#2a2622" stroke-opacity="0.32" stroke-width="0.7"/><line x1="501.56" y1="89.65" x2="3372.98" y2="1426.46" stroke="#2a2622" stroke-opacity="0.32" stroke-width="0.7"/><line x1="-99.09" y1="98.96" x2="-1272.78" y2="1498.44" stroke="#2a2622" stroke-opacity="0.32" stroke-width="0.7"/><line x1="518.69" y1="91.78" x2="3601.46" y2="1422.92" stroke="#2a2622" stroke-opacity="0.32" stroke-width="0.7"/><line x1="-113.28" y1="101.57" x2="-1501.26" y2="1501.98" stroke="#2a2622" stroke-opacity="0.32" stroke-width="0.7"/><line x1="536.95" y1="94.05" x2="3829.94" y2="1419.38" stroke="#2a2622" stroke-opacity="0.32" stroke-width="0.7"/><line x1="-128.40" y1="104.36" x2="-1729.74" y2="1505.52" stroke="#2a2622" stroke-opacity="0.32" stroke-width="0.7"/><line x1="556.46" y1="96.48" x2="4058.42" y2="1415.84" stroke="#2a2622" stroke-opacity="0.32" stroke-width="0.7"/><line x1="-144.56" y1="107.34" x2="-1958.22" y2="1509.06" stroke="#2a2622" stroke-opacity="0.32" stroke-width="0.7"/><line x1="577.35" y1="99.08" x2="4286.90" y2="1412.30" stroke="#2a2622" stroke-opacity="0.32" stroke-width="0.7"/><line x1="-161.85" y1="110.53" x2="-2186.70" y2="1512.60" stroke="#2a2622" stroke-opacity="0.32" stroke-width="0.7"/><line x1="599.76" y1="101.86" x2="4515.38" y2="1408.76" stroke="#2a2622" stroke-opacity="0.32" stroke-width="0.7"/><line x1="-180.41" y1="113.95" x2="-2415.18" y2="1516.14" stroke="#2a2622" stroke-opacity="0.32" stroke-width="0.7"/><line x1="623.88" y1="104.86" x2="4743.86" y2="1405.22" stroke="#2a2622" stroke-opacity="0.32" stroke-width="0.7"/><line x1="-200.39" y1="117.63" x2="-2643.66" y2="1519.68" stroke="#2a2622" stroke-opacity="0.32" stroke-width="0.7"/><line x1="649.90" y1="108.10" x2="4972.34" y2="1401.68" stroke="#2a2622" stroke-opacity="0.32" stroke-width="0.7"/><line x1="-221.93" y1="121.61" x2="-2872.14" y2="1523.22" stroke="#2a2622" stroke-opacity="0.32" stroke-width="0.7"/><line x1="678.06" y1="111.60" x2="5200.82" y2="1398.14" stroke="#2a2622" stroke-opacity="0.32" stroke-width="0.7"/><line x1="-245.25" y1="125.90" x2="-3100.62" y2="1526.76" stroke="#2a2622" stroke-opacity="0.32" stroke-width="0.7"/><line x1="708.63" y1="115.40" x2="5429.30" y2="1394.60" stroke="#2a2622" stroke-opacity="0.32" stroke-width="0.7"/><line x1="-270.57" y1="130.57" x2="-3329.10" y2="1530.30" stroke="#2a2622" stroke-opacity="0.32" stroke-width="0.7"/><line x1="741.94" y1="119.54" x2="5657.78" y2="1391.06" stroke="#2a2622" stroke-opacity="0.32" stroke-width="0.7"/><line x1="-298.16" y1="135.66" x2="-3557.58" y2="1533.84" stroke="#2a2622" stroke-opacity="0.32" stroke-width="0.7"/><line x1="778.37" y1="124.07" x2="5886.26" y2="1387.52" stroke="#2a2622" stroke-opacity="0.32" stroke-width="0.7"/><line x1="-328.33" y1="141.22" x2="-3786.06" y2="1537.38" stroke="#2a2622" stroke-opacity="0.32" stroke-width="0.7"/><line x1="818.39" y1="129.05" x2="6114.74" y2="1383.98" stroke="#2a2622" stroke-opacity="0.32" stroke-width="0.7"/><line x1="-361.47" y1="147.33" x2="-4014.54" y2="1540.92" stroke="#2a2622" stroke-opacity="0.32" stroke-width="0.7"/><line x1="862.54" y1="134.54" x2="6343.22" y2="1380.44" stroke="#2a2622" stroke-opacity="0.32" stroke-width="0.7"/><line x1="-398.03" y1="154.07" x2="-4243.02" y2="1544.46" stroke="#2a2622" stroke-opacity="0.32" stroke-width="0.7"/><line x1="911.52" y1="140.63" x2="6571.70" y2="1376.90" stroke="#2a2622" stroke-opacity="0.32" stroke-width="0.7"/><line x1="-438.59" y1="161.55" x2="-4471.50" y2="1548.00" stroke="#2a2622" stroke-opacity="0.32" stroke-width="0.7"/><line x1="966.14" y1="147.42" x2="6800.18" y2="1373.36" stroke="#2a2622" stroke-opacity="0.32" stroke-width="0.7"/><line x1="-483.83" y1="169.88" x2="-4699.98" y2="1551.54" stroke="#2a2622" stroke-opacity="0.32" stroke-width="0.7"/><line x1="1027.46" y1="155.04" x2="7028.66" y2="1369.82" stroke="#2a2622" stroke-opacity="0.32" stroke-width="0.7"/><line x1="-534.60" y1="179.24" x2="-4928.46" y2="1555.08" stroke="#2a2622" stroke-opacity="0.32" stroke-width="0.7"/><line x1="1096.77" y1="163.66" x2="7257.14" y2="1366.28" stroke="#2a2622" stroke-opacity="0.32" stroke-width="0.7"/><line x1="-592.00" y1="189.83" x2="-5156.94" y2="1558.62" stroke="#2a2622" stroke-opacity="0.32" stroke-width="0.7"/><line x1="1175.75" y1="173.48" x2="7485.62" y2="1362.74" stroke="#2a2622" stroke-opacity="0.32" stroke-width="0.7"/><line x1="-657.41" y1="201.88" x2="-5385.42" y2="1562.16" stroke="#2a2622" stroke-opacity="0.32" stroke-width="0.7"/><line x1="1266.57" y1="184.77" x2="7714.10" y2="1359.20" stroke="#2a2622" stroke-opacity="0.32" stroke-width="0.7"/><line x1="-732.62" y1="215.75" x2="-5613.90" y2="1565.70" stroke="#2a2622" stroke-opacity="0.32" stroke-width="0.7"/><line x1="1372.13" y1="197.90" x2="7942.58" y2="1355.66" stroke="#2a2622" stroke-opacity="0.32" stroke-width="0.7"/><line x1="-820.04" y1="231.86" x2="-5842.38" y2="1569.24" stroke="#2a2622" stroke-opacity="0.32" stroke-width="0.7"/><line x1="1496.32" y1="213.34" x2="8171.06" y2="1352.12" stroke="#2a2622" stroke-opacity="0.32" stroke-width="0.7"/><line x1="-922.88" y1="250.82" x2="-6070.86" y2="1572.78" stroke="#2a2622" stroke-opacity="0.32" stroke-width="0.7"/><line x1="1644.54" y1="231.77" x2="8399.54" y2="1348.58" stroke="#2a2622" stroke-opacity="0.32" stroke-width="0.7"/><line x1="-1045.63" y1="273.45" x2="-6299.34" y2="1576.32" stroke="#2a2622" stroke-opacity="0.32" stroke-width="0.7"/><line x1="1824.52" y1="254.15" x2="8628.02" y2="1345.04" stroke="#2a2622" stroke-opacity="0.32" stroke-width="0.7"/><line x1="-1194.68" y1="300.93" x2="-6527.82" y2="1579.86" stroke="#2a2622" stroke-opacity="0.32" stroke-width="0.7"/><line x1="2047.70" y1="281.90" x2="8856.50" y2="1341.50" stroke="#2a2622" stroke-opacity="0.32" stroke-width="0.7"/><line x1="-1379.50" y1="335.00" x2="-6756.30" y2="1583.40" stroke="#2a2622" stroke-opacity="0.32" stroke-width="0.7"/><line x1="2331.75" y1="317.22" x2="9084.98" y2="1337.96" stroke="#2a2622" stroke-opacity="0.32" stroke-width="0.7"/><line x1="-1614.73" y1="378.36" x2="-6984.78" y2="1586.94" stroke="#2a2622" stroke-opacity="0.32" stroke-width="0.7"/><line x1="2705.49" y1="363.69" x2="9313.46" y2="1334.42" stroke="#2a2622" stroke-opacity="0.32" stroke-width="0.7"/><line x1="-1924.24" y1="435.42" x2="-7213.26" y2="1590.48" stroke="#2a2622" stroke-opacity="0.32" stroke-width="0.7"/><line x1="3219.39" y1="427.59" x2="9541.94" y2="1330.88" stroke="#2a2622" stroke-opacity="0.32" stroke-width="0.7"/><line x1="-2349.81" y1="513.88" x2="-7441.74" y2="1594.02" stroke="#2a2622" stroke-opacity="0.32" stroke-width="0.7"/><line x1="3970.47" y1="520.98" x2="9770.42" y2="1327.34" stroke="#2a2622" stroke-opacity="0.32" stroke-width="0.7"/><line x1="-2971.81" y1="628.54" x2="-7670.22" y2="1597.56" stroke="#2a2622" stroke-opacity="0.32" stroke-width="0.7"/><line x1="5172.20" y1="670.40" x2="9998.90" y2="1323.80" stroke="#2a2622" stroke-opacity="0.32" stroke-width="0.7"/><line x1="-3967.00" y1="812.00" x2="-7898.70" y2="1601.10" stroke="#2a2622" stroke-opacity="0.32" stroke-width="0.7"/><line x1="7403.99" y1="947.90" x2="10227.38" y2="1320.26" stroke="#2a2622" stroke-opacity="0.32" stroke-width="0.7"/><line x1="-5815.21" y1="1152.71" x2="-8127.18" y2="1604.64" stroke="#2a2622" stroke-opacity="0.32" stroke-width="0.7"/><rect x="0" y="48" width="382" height="70" fill="url(#fdk)"/><line x1="345.5" y1="71" x2="345.5" y2="233" stroke="#2a2622" stroke-opacity="0.7" stroke-width="1"/></g><ellipse cx="156.0" cy="143.5" rx="16" ry="6" fill="#0d0d0d" transform="rotate(-28 156.0 143.5)" /><polygon points="177.0,149.0 191.0,142.0 217.0,144.0 203.0,160.5" fill="#0c0c0c" /><ellipse cx="238.0" cy="142.0" rx="7" ry="4" fill="#101010" transform="rotate(-20 238.0 142.0)" /><ellipse cx="190.0" cy="112.0" rx="4" ry="3" fill="#151515" transform="rotate(-30 190.0 112.0)" /><ellipse cx="211.0" cy="178.0" rx="11.5" ry="27" fill="#121212" transform="rotate(16 211.0 178.0)" /><polygon points="164.8,102.8 164.8,101.3 165.0,99.8 165.2,98.3 165.6,96.8 166.1,95.4 166.7,94.0 167.4,92.7 168.2,91.5 169.1,90.4 170.0,89.3 171.1,88.5 172.1,87.7 173.2,87.1 174.4,86.6 175.6,86.3 176.7,86.2 177.9,86.2 179.0,86.3 180.1,86.6 186.6,88.6 187.7,89.1 188.7,89.7 189.6,90.5 190.5,91.4 191.3,92.4 192.0,93.5 192.5,94.7 193.0,96.1 193.3,97.4 193.6,98.9 193.7,100.4 193.7,101.9 193.5,103.4 193.3,104.9 192.9,106.4 192.4,107.8 191.8,109.2 191.1,110.5 190.3,111.7 189.4,112.8 188.5,113.9 187.4,114.7 186.4,115.5 185.3,116.1 184.1,116.6 182.9,116.9 181.8,117.0 180.6,117.0 179.5,116.9 178.4,116.6 171.9,114.6 170.8,114.1 169.8,113.5 168.9,112.7 168.0,111.8 167.2,110.8 166.5,109.7 166.0,108.5 165.5,107.1 165.2,105.8 164.9,104.3" fill="url(#trd)" /><ellipse cx="182.5" cy="102.6" rx="11" ry="14.6" fill="#c2bcb0" transform="rotate(12 182.5 102.6)" /><rect x="184" y="101" width="4.5" height="4" fill="#f2efe8"/><polygon points="118.8,122.1 119.0,120.1 119.3,118.1 119.8,116.1 120.5,114.2 121.3,112.4 122.3,110.7 123.4,109.1 124.6,107.6 125.9,106.3 127.3,105.1 128.8,104.1 130.4,103.3 132.0,102.7 133.6,102.3 135.3,102.2 136.9,102.2 138.5,102.4 140.1,102.9 149.1,105.8 150.6,106.4 152.0,107.2 153.3,108.3 154.6,109.5 155.7,110.8 156.6,112.3 157.5,114.0 158.1,115.7 158.6,117.6 159.0,119.5 159.2,121.4 159.2,123.4 159.0,125.4 158.7,127.4 158.2,129.4 157.5,131.3 156.7,133.1 155.7,134.8 154.6,136.4 153.4,137.9 152.1,139.2 150.7,140.4 149.2,141.4 147.6,142.2 146.0,142.8 144.4,143.2 142.7,143.3 141.1,143.3 139.5,143.1 137.9,142.6 128.9,139.7 127.4,139.1 126.0,138.3 124.7,137.2 123.4,136.0 122.3,134.7 121.4,133.2 120.5,131.5 119.9,129.8 119.4,127.9 119.0,126.0 118.8,124.1" fill="url(#trd)" /><ellipse cx="143.5" cy="124.2" rx="15.5" ry="19.3" fill="#bfb9ad" transform="rotate(12 143.5 124.2)" /><path d="M144 129 L150 127 L157 134 L151 137 Z" fill="#1a1a1a"/><rect x="143.5" y="123.5" width="5.5" height="5" fill="#f2efe8"/><polygon points="168.6,123.8 193.1,109.2 224.2,121.6 201.6,139.2" fill="#0a7ad6" /><polygon points="168.6,123.8 201.6,139.2 201.6,149.9 168.6,133.9" fill="#006fca" /><polygon points="201.6,139.2 224.2,121.6 224.2,129.6 201.6,149.9" fill="#0066bb" /><polygon points="240.6,138.6 240.8,136.7 241.0,134.7 241.3,132.7 241.7,130.6 242.3,128.5 242.9,126.4 243.6,124.3 244.4,122.3 245.3,120.3 246.3,118.5 247.2,116.7 248.3,115.1 249.3,113.7 250.4,112.4 251.5,111.3 252.6,110.4 253.6,109.7 254.7,109.2 255.7,108.9 256.6,108.9 257.5,109.0 270.5,111.5 271.3,111.9 272.0,112.5 272.7,113.3 273.2,114.3 273.7,115.5 274.0,116.9 274.2,118.4 274.3,120.1 274.4,121.9 274.2,123.8 274.0,125.8 273.7,127.8 273.3,129.9 272.7,132.0 272.1,134.1 271.4,136.2 270.6,138.2 269.7,140.2 268.7,142.0 267.8,143.8 266.7,145.4 265.7,146.8 264.6,148.1 263.5,149.2 262.4,150.1 261.4,150.8 260.3,151.3 259.3,151.6 258.4,151.6 257.5,151.5 244.5,149.0 243.7,148.6 243.0,148.0 242.3,147.2 241.8,146.2 241.3,145.0 241.0,143.6 240.8,142.1 240.7,140.4" fill="url(#trd2)" /><ellipse cx="264.0" cy="131.5" rx="8.5" ry="21" fill="#d3cec4" transform="rotate(18 264.0 131.5)" /><rect x="265.6" y="131.3" width="6.4" height="6.9" fill="#f0ede6"/><polygon points="197.0,184.7 197.0,182.1 197.2,179.3 197.6,176.5 198.1,173.6 198.7,170.6 199.5,167.7 200.4,164.8 201.4,162.0 202.5,159.2 203.7,156.6 205.0,154.2 206.4,151.9 207.8,149.9 209.2,148.1 210.7,146.5 212.2,145.2 213.6,144.2 215.0,143.5 216.4,143.0 217.7,142.9 236.7,145.4 238.0,145.6 239.2,146.1 240.2,146.9 241.2,148.0 242.0,149.4 242.7,151.0 243.2,152.9 243.7,155.0 243.9,157.3 244.0,159.8 244.0,162.4 243.8,165.2 243.4,168.0 242.9,170.9 242.3,173.9 241.5,176.8 240.6,179.7 239.6,182.5 238.5,185.3 237.3,187.9 236.0,190.3 234.6,192.6 233.2,194.6 231.8,196.4 230.3,198.0 228.8,199.3 227.4,200.3 226.0,201.0 224.6,201.5 223.3,201.6 204.3,199.1 203.0,198.9 201.8,198.4 200.8,197.6 199.8,196.5 199.0,195.1 198.3,193.5 197.8,191.6 197.3,189.5 197.1,187.2" fill="url(#trd2)" /><ellipse cx="230.0" cy="173.5" rx="12" ry="29" fill="#d6d1c7" transform="rotate(16 230.0 173.5)" /><rect x="235" y="174" width="9" height="9" fill="#efece5"/><ellipse cx="136.5" cy="77.0" rx="2.2" ry="1.5" fill="#e8d020" transform="rotate(0 136.5 77.0)" /><path d="M132 76 L141 75" stroke="#6a6020" stroke-width="0.8"/></svg>
<div class="a" style="left:26px;top:47px;width:382px;height:1px;background:#555"></div>
<div class="a" style="left:26px;top:47px;width:1px;height:233px;background:#555"></div>
<div class="a" style="left:408px;top:47px;width:1px;height:234px;background:#fff"></div>
<div class="a" style="left:26px;top:280px;width:383px;height:1px;background:#fff"></div>
<svg class="a" style="left:412px;top:47px" width="369" height="221" viewBox="0 0 369 221"><rect width="369" height="221" fill="#3f3f3f"/><line x1="16.25" y1="0" x2="16.25" y2="221" stroke="#484848" stroke-width="1"/><line x1="47.10" y1="0" x2="47.10" y2="221" stroke="#484848" stroke-width="1"/><line x1="77.95" y1="0" x2="77.95" y2="221" stroke="#484848" stroke-width="1"/><line x1="0" y1="16.15" x2="369" y2="16.15" stroke="#484848" stroke-width="1"/><line x1="108.80" y1="0" x2="108.80" y2="221" stroke="#484848" stroke-width="1"/><line x1="0" y1="47.00" x2="369" y2="47.00" stroke="#484848" stroke-width="1"/><line x1="139.65" y1="0" x2="139.65" y2="221" stroke="#484848" stroke-width="1"/><line x1="0" y1="77.85" x2="369" y2="77.85" stroke="#484848" stroke-width="1"/><line x1="170.50" y1="0" x2="170.50" y2="221" stroke="#484848" stroke-width="1"/><line x1="0" y1="108.70" x2="369" y2="108.70" stroke="#484848" stroke-width="1"/><line x1="201.35" y1="0" x2="201.35" y2="221" stroke="#484848" stroke-width="1"/><line x1="0" y1="139.55" x2="369" y2="139.55" stroke="#484848" stroke-width="1"/><line x1="232.20" y1="0" x2="232.20" y2="221" stroke="#484848" stroke-width="1"/><line x1="0" y1="170.40" x2="369" y2="170.40" stroke="#484848" stroke-width="1"/><line x1="263.05" y1="0" x2="263.05" y2="221" stroke="#484848" stroke-width="1"/><line x1="0" y1="201.25" x2="369" y2="201.25" stroke="#484848" stroke-width="1"/><line x1="293.90" y1="0" x2="293.90" y2="221" stroke="#484848" stroke-width="1"/><line x1="324.75" y1="0" x2="324.75" y2="221" stroke="#484848" stroke-width="1"/><line x1="355.60" y1="0" x2="355.60" y2="221" stroke="#484848" stroke-width="1"/><line x1="170.50" y1="0" x2="170.50" y2="221" stroke="#d8d8d8" stroke-width="1.3"/><line x1="0" y1="108.70" x2="369" y2="108.70" stroke="#d8d8d8" stroke-width="1.3"/><rect x="139.50" y="77.70" width="61.80" height="61.60" fill="none" stroke="#1f7a5c" stroke-width="1"/><rect x="138.95" y="77.15" width="1.10" height="1.10" fill="#cfe8ee" fill-opacity="0.6"/><rect x="200.75" y="77.15" width="1.10" height="1.10" fill="#cfe8ee" fill-opacity="0.6"/><rect x="138.95" y="138.75" width="1.10" height="1.10" fill="#cfe8ee" fill-opacity="0.6"/><rect x="200.75" y="138.75" width="1.10" height="1.10" fill="#cfe8ee" fill-opacity="0.6"/><rect x="82.60" y="29.40" width="21.80" height="62.20" fill="none" stroke="#1a8598" stroke-width="1"/><line x1="82.60" y1="91.60" x2="104.40" y2="91.60" stroke="#1a8598" stroke-width="1"/><line x1="82.60" y1="91.00" x2="104.40" y2="91.00" stroke="#1a8598" stroke-width="1"/><line x1="82.60" y1="89.23" x2="104.40" y2="89.23" stroke="#1a8598" stroke-width="1"/><line x1="82.60" y1="86.36" x2="104.40" y2="86.36" stroke="#1a8598" stroke-width="1"/><line x1="82.60" y1="82.49" x2="104.40" y2="82.49" stroke="#1a8598" stroke-width="1"/><line x1="82.60" y1="77.78" x2="104.40" y2="77.78" stroke="#1a8598" stroke-width="1"/><line x1="82.60" y1="72.40" x2="104.40" y2="72.40" stroke="#1a8598" stroke-width="1"/><line x1="82.60" y1="66.57" x2="104.40" y2="66.57" stroke="#1a8598" stroke-width="1"/><line x1="82.60" y1="60.50" x2="104.40" y2="60.50" stroke="#1a8598" stroke-width="1"/><line x1="82.60" y1="54.43" x2="104.40" y2="54.43" stroke="#1a8598" stroke-width="1"/><line x1="82.60" y1="48.60" x2="104.40" y2="48.60" stroke="#1a8598" stroke-width="1"/><line x1="82.60" y1="43.22" x2="104.40" y2="43.22" stroke="#1a8598" stroke-width="1"/><line x1="82.60" y1="38.51" x2="104.40" y2="38.51" stroke="#1a8598" stroke-width="1"/><line x1="82.60" y1="34.64" x2="104.40" y2="34.64" stroke="#1a8598" stroke-width="1"/><line x1="82.60" y1="31.77" x2="104.40" y2="31.77" stroke="#1a8598" stroke-width="1"/><line x1="82.60" y1="30.00" x2="104.40" y2="30.00" stroke="#1a8598" stroke-width="1"/><line x1="82.60" y1="29.40" x2="104.40" y2="29.40" stroke="#1a8598" stroke-width="1"/><rect x="82.05" y="91.05" width="1.10" height="1.10" fill="#cfe8ee" fill-opacity="0.6"/><rect x="103.85" y="91.05" width="1.10" height="1.10" fill="#cfe8ee" fill-opacity="0.6"/><rect x="82.05" y="90.45" width="1.10" height="1.10" fill="#cfe8ee" fill-opacity="0.6"/><rect x="103.85" y="90.45" width="1.10" height="1.10" fill="#cfe8ee" fill-opacity="0.6"/><rect x="82.05" y="88.68" width="1.10" height="1.10" fill="#cfe8ee" fill-opacity="0.6"/><rect x="103.85" y="88.68" width="1.10" height="1.10" fill="#cfe8ee" fill-opacity="0.6"/><rect x="82.05" y="85.81" width="1.10" height="1.10" fill="#cfe8ee" fill-opacity="0.6"/><rect x="103.85" y="85.81" width="1.10" height="1.10" fill="#cfe8ee" fill-opacity="0.6"/><rect x="82.05" y="81.94" width="1.10" height="1.10" fill="#cfe8ee" fill-opacity="0.6"/><rect x="103.85" y="81.94" width="1.10" height="1.10" fill="#cfe8ee" fill-opacity="0.6"/><rect x="82.05" y="77.23" width="1.10" height="1.10" fill="#cfe8ee" fill-opacity="0.6"/><rect x="103.85" y="77.23" width="1.10" height="1.10" fill="#cfe8ee" fill-opacity="0.6"/><rect x="82.05" y="71.85" width="1.10" height="1.10" fill="#cfe8ee" fill-opacity="0.6"/><rect x="103.85" y="71.85" width="1.10" height="1.10" fill="#cfe8ee" fill-opacity="0.6"/><rect x="82.05" y="66.02" width="1.10" height="1.10" fill="#cfe8ee" fill-opacity="0.6"/><rect x="103.85" y="66.02" width="1.10" height="1.10" fill="#cfe8ee" fill-opacity="0.6"/><rect x="82.05" y="59.95" width="1.10" height="1.10" fill="#cfe8ee" fill-opacity="0.6"/><rect x="103.85" y="59.95" width="1.10" height="1.10" fill="#cfe8ee" fill-opacity="0.6"/><rect x="82.05" y="53.88" width="1.10" height="1.10" fill="#cfe8ee" fill-opacity="0.6"/><rect x="103.85" y="53.88" width="1.10" height="1.10" fill="#cfe8ee" fill-opacity="0.6"/><rect x="82.05" y="48.05" width="1.10" height="1.10" fill="#cfe8ee" fill-opacity="0.6"/><rect x="103.85" y="48.05" width="1.10" height="1.10" fill="#cfe8ee" fill-opacity="0.6"/><rect x="82.05" y="42.67" width="1.10" height="1.10" fill="#cfe8ee" fill-opacity="0.6"/><rect x="103.85" y="42.67" width="1.10" height="1.10" fill="#cfe8ee" fill-opacity="0.6"/><rect x="82.05" y="37.96" width="1.10" height="1.10" fill="#cfe8ee" fill-opacity="0.6"/><rect x="103.85" y="37.96" width="1.10" height="1.10" fill="#cfe8ee" fill-opacity="0.6"/><rect x="82.05" y="34.09" width="1.10" height="1.10" fill="#cfe8ee" fill-opacity="0.6"/><rect x="103.85" y="34.09" width="1.10" height="1.10" fill="#cfe8ee" fill-opacity="0.6"/><rect x="82.05" y="31.22" width="1.10" height="1.10" fill="#cfe8ee" fill-opacity="0.6"/><rect x="103.85" y="31.22" width="1.10" height="1.10" fill="#cfe8ee" fill-opacity="0.6"/><rect x="82.05" y="29.45" width="1.10" height="1.10" fill="#cfe8ee" fill-opacity="0.6"/><rect x="103.85" y="29.45" width="1.10" height="1.10" fill="#cfe8ee" fill-opacity="0.6"/><rect x="82.05" y="28.85" width="1.10" height="1.10" fill="#cfe8ee" fill-opacity="0.6"/><rect x="103.85" y="28.85" width="1.10" height="1.10" fill="#cfe8ee" fill-opacity="0.6"/><rect x="82.60" y="125.60" width="21.80" height="62.20" fill="none" stroke="#1a8598" stroke-width="1"/><line x1="82.60" y1="187.80" x2="104.40" y2="187.80" stroke="#1a8598" stroke-width="1"/><line x1="82.60" y1="187.20" x2="104.40" y2="187.20" stroke="#1a8598" stroke-width="1"/><line x1="82.60" y1="185.43" x2="104.40" y2="185.43" stroke="#1a8598" stroke-width="1"/><line x1="82.60" y1="182.56" x2="104.40" y2="182.56" stroke="#1a8598" stroke-width="1"/><line x1="82.60" y1="178.69" x2="104.40" y2="178.69" stroke="#1a8598" stroke-width="1"/><line x1="82.60" y1="173.98" x2="104.40" y2="173.98" stroke="#1a8598" stroke-width="1"/><line x1="82.60" y1="168.60" x2="104.40" y2="168.60" stroke="#1a8598" stroke-width="1"/><line x1="82.60" y1="162.77" x2="104.40" y2="162.77" stroke="#1a8598" stroke-width="1"/><line x1="82.60" y1="156.70" x2="104.40" y2="156.70" stroke="#1a8598" stroke-width="1"/><line x1="82.60" y1="150.63" x2="104.40" y2="150.63" stroke="#1a8598" stroke-width="1"/><line x1="82.60" y1="144.80" x2="104.40" y2="144.80" stroke="#1a8598" stroke-width="1"/><line x1="82.60" y1="139.42" x2="104.40" y2="139.42" stroke="#1a8598" stroke-width="1"/><line x1="82.60" y1="134.71" x2="104.40" y2="134.71" stroke="#1a8598" stroke-width="1"/><line x1="82.60" y1="130.84" x2="104.40" y2="130.84" stroke="#1a8598" stroke-width="1"/><line x1="82.60" y1="127.97" x2="104.40" y2="127.97" stroke="#1a8598" stroke-width="1"/><line x1="82.60" y1="126.20" x2="104.40" y2="126.20" stroke="#1a8598" stroke-width="1"/><line x1="82.60" y1="125.60" x2="104.40" y2="125.60" stroke="#1a8598" stroke-width="1"/><rect x="82.05" y="187.25" width="1.10" height="1.10" fill="#cfe8ee" fill-opacity="0.6"/><rect x="103.85" y="187.25" width="1.10" height="1.10" fill="#cfe8ee" fill-opacity="0.6"/><rect x="82.05" y="186.65" width="1.10" height="1.10" fill="#cfe8ee" fill-opacity="0.6"/><rect x="103.85" y="186.65" width="1.10" height="1.10" fill="#cfe8ee" fill-opacity="0.6"/><rect x="82.05" y="184.88" width="1.10" height="1.10" fill="#cfe8ee" fill-opacity="0.6"/><rect x="103.85" y="184.88" width="1.10" height="1.10" fill="#cfe8ee" fill-opacity="0.6"/><rect x="82.05" y="182.01" width="1.10" height="1.10" fill="#cfe8ee" fill-opacity="0.6"/><rect x="103.85" y="182.01" width="1.10" height="1.10" fill="#cfe8ee" fill-opacity="0.6"/><rect x="82.05" y="178.14" width="1.10" height="1.10" fill="#cfe8ee" fill-opacity="0.6"/><rect x="103.85" y="178.14" width="1.10" height="1.10" fill="#cfe8ee" fill-opacity="0.6"/><rect x="82.05" y="173.43" width="1.10" height="1.10" fill="#cfe8ee" fill-opacity="0.6"/><rect x="103.85" y="173.43" width="1.10" height="1.10" fill="#cfe8ee" fill-opacity="0.6"/><rect x="82.05" y="168.05" width="1.10" height="1.10" fill="#cfe8ee" fill-opacity="0.6"/><rect x="103.85" y="168.05" width="1.10" height="1.10" fill="#cfe8ee" fill-opacity="0.6"/><rect x="82.05" y="162.22" width="1.10" height="1.10" fill="#cfe8ee" fill-opacity="0.6"/><rect x="103.85" y="162.22" width="1.10" height="1.10" fill="#cfe8ee" fill-opacity="0.6"/><rect x="82.05" y="156.15" width="1.10" height="1.10" fill="#cfe8ee" fill-opacity="0.6"/><rect x="103.85" y="156.15" width="1.10" height="1.10" fill="#cfe8ee" fill-opacity="0.6"/><rect x="82.05" y="150.08" width="1.10" height="1.10" fill="#cfe8ee" fill-opacity="0.6"/><rect x="103.85" y="150.08" width="1.10" height="1.10" fill="#cfe8ee" fill-opacity="0.6"/><rect x="82.05" y="144.25" width="1.10" height="1.10" fill="#cfe8ee" fill-opacity="0.6"/><rect x="103.85" y="144.25" width="1.10" height="1.10" fill="#cfe8ee" fill-opacity="0.6"/><rect x="82.05" y="138.87" width="1.10" height="1.10" fill="#cfe8ee" fill-opacity="0.6"/><rect x="103.85" y="138.87" width="1.10" height="1.10" fill="#cfe8ee" fill-opacity="0.6"/><rect x="82.05" y="134.16" width="1.10" height="1.10" fill="#cfe8ee" fill-opacity="0.6"/><rect x="103.85" y="134.16" width="1.10" height="1.10" fill="#cfe8ee" fill-opacity="0.6"/><rect x="82.05" y="130.29" width="1.10" height="1.10" fill="#cfe8ee" fill-opacity="0.6"/><rect x="103.85" y="130.29" width="1.10" height="1.10" fill="#cfe8ee" fill-opacity="0.6"/><rect x="82.05" y="127.42" width="1.10" height="1.10" fill="#cfe8ee" fill-opacity="0.6"/><rect x="103.85" y="127.42" width="1.10" height="1.10" fill="#cfe8ee" fill-opacity="0.6"/><rect x="82.05" y="125.65" width="1.10" height="1.10" fill="#cfe8ee" fill-opacity="0.6"/><rect x="103.85" y="125.65" width="1.10" height="1.10" fill="#cfe8ee" fill-opacity="0.6"/><rect x="82.05" y="125.05" width="1.10" height="1.10" fill="#cfe8ee" fill-opacity="0.6"/><rect x="103.85" y="125.05" width="1.10" height="1.10" fill="#cfe8ee" fill-opacity="0.6"/><rect x="236.70" y="29.40" width="21.80" height="62.20" fill="none" stroke="#1a8598" stroke-width="1"/><line x1="236.70" y1="91.60" x2="258.50" y2="91.60" stroke="#1a8598" stroke-width="1"/><line x1="236.70" y1="91.00" x2="258.50" y2="91.00" stroke="#1a8598" stroke-width="1"/><line x1="236.70" y1="89.23" x2="258.50" y2="89.23" stroke="#1a8598" stroke-width="1"/><line x1="236.70" y1="86.36" x2="258.50" y2="86.36" stroke="#1a8598" stroke-width="1"/><line x1="236.70" y1="82.49" x2="258.50" y2="82.49" stroke="#1a8598" stroke-width="1"/><line x1="236.70" y1="77.78" x2="258.50" y2="77.78" stroke="#1a8598" stroke-width="1"/><line x1="236.70" y1="72.40" x2="258.50" y2="72.40" stroke="#1a8598" stroke-width="1"/><line x1="236.70" y1="66.57" x2="258.50" y2="66.57" stroke="#1a8598" stroke-width="1"/><line x1="236.70" y1="60.50" x2="258.50" y2="60.50" stroke="#1a8598" stroke-width="1"/><line x1="236.70" y1="54.43" x2="258.50" y2="54.43" stroke="#1a8598" stroke-width="1"/><line x1="236.70" y1="48.60" x2="258.50" y2="48.60" stroke="#1a8598" stroke-width="1"/><line x1="236.70" y1="43.22" x2="258.50" y2="43.22" stroke="#1a8598" stroke-width="1"/><line x1="236.70" y1="38.51" x2="258.50" y2="38.51" stroke="#1a8598" stroke-width="1"/><line x1="236.70" y1="34.64" x2="258.50" y2="34.64" stroke="#1a8598" stroke-width="1"/><line x1="236.70" y1="31.77" x2="258.50" y2="31.77" stroke="#1a8598" stroke-width="1"/><line x1="236.70" y1="30.00" x2="258.50" y2="30.00" stroke="#1a8598" stroke-width="1"/><line x1="236.70" y1="29.40" x2="258.50" y2="29.40" stroke="#1a8598" stroke-width="1"/><rect x="236.15" y="91.05" width="1.10" height="1.10" fill="#cfe8ee" fill-opacity="0.6"/><rect x="257.95" y="91.05" width="1.10" height="1.10" fill="#cfe8ee" fill-opacity="0.6"/><rect x="236.15" y="90.45" width="1.10" height="1.10" fill="#cfe8ee" fill-opacity="0.6"/><rect x="257.95" y="90.45" width="1.10" height="1.10" fill="#cfe8ee" fill-opacity="0.6"/><rect x="236.15" y="88.68" width="1.10" height="1.10" fill="#cfe8ee" fill-opacity="0.6"/><rect x="257.95" y="88.68" width="1.10" height="1.10" fill="#cfe8ee" fill-opacity="0.6"/><rect x="236.15" y="85.81" width="1.10" height="1.10" fill="#cfe8ee" fill-opacity="0.6"/><rect x="257.95" y="85.81" width="1.10" height="1.10" fill="#cfe8ee" fill-opacity="0.6"/><rect x="236.15" y="81.94" width="1.10" height="1.10" fill="#cfe8ee" fill-opacity="0.6"/><rect x="257.95" y="81.94" width="1.10" height="1.10" fill="#cfe8ee" fill-opacity="0.6"/><rect x="236.15" y="77.23" width="1.10" height="1.10" fill="#cfe8ee" fill-opacity="0.6"/><rect x="257.95" y="77.23" width="1.10" height="1.10" fill="#cfe8ee" fill-opacity="0.6"/><rect x="236.15" y="71.85" width="1.10" height="1.10" fill="#cfe8ee" fill-opacity="0.6"/><rect x="257.95" y="71.85" width="1.10" height="1.10" fill="#cfe8ee" fill-opacity="0.6"/><rect x="236.15" y="66.02" width="1.10" height="1.10" fill="#cfe8ee" fill-opacity="0.6"/><rect x="257.95" y="66.02" width="1.10" height="1.10" fill="#cfe8ee" fill-opacity="0.6"/><rect x="236.15" y="59.95" width="1.10" height="1.10" fill="#cfe8ee" fill-opacity="0.6"/><rect x="257.95" y="59.95" width="1.10" height="1.10" fill="#cfe8ee" fill-opacity="0.6"/><rect x="236.15" y="53.88" width="1.10" height="1.10" fill="#cfe8ee" fill-opacity="0.6"/><rect x="257.95" y="53.88" width="1.10" height="1.10" fill="#cfe8ee" fill-opacity="0.6"/><rect x="236.15" y="48.05" width="1.10" height="1.10" fill="#cfe8ee" fill-opacity="0.6"/><rect x="257.95" y="48.05" width="1.10" height="1.10" fill="#cfe8ee" fill-opacity="0.6"/><rect x="236.15" y="42.67" width="1.10" height="1.10" fill="#cfe8ee" fill-opacity="0.6"/><rect x="257.95" y="42.67" width="1.10" height="1.10" fill="#cfe8ee" fill-opacity="0.6"/><rect x="236.15" y="37.96" width="1.10" height="1.10" fill="#cfe8ee" fill-opacity="0.6"/><rect x="257.95" y="37.96" width="1.10" height="1.10" fill="#cfe8ee" fill-opacity="0.6"/><rect x="236.15" y="34.09" width="1.10" height="1.10" fill="#cfe8ee" fill-opacity="0.6"/><rect x="257.95" y="34.09" width="1.10" height="1.10" fill="#cfe8ee" fill-opacity="0.6"/><rect x="236.15" y="31.22" width="1.10" height="1.10" fill="#cfe8ee" fill-opacity="0.6"/><rect x="257.95" y="31.22" width="1.10" height="1.10" fill="#cfe8ee" fill-opacity="0.6"/><rect x="236.15" y="29.45" width="1.10" height="1.10" fill="#cfe8ee" fill-opacity="0.6"/><rect x="257.95" y="29.45" width="1.10" height="1.10" fill="#cfe8ee" fill-opacity="0.6"/><rect x="236.15" y="28.85" width="1.10" height="1.10" fill="#cfe8ee" fill-opacity="0.6"/><rect x="257.95" y="28.85" width="1.10" height="1.10" fill="#cfe8ee" fill-opacity="0.6"/><rect x="236.70" y="125.60" width="21.80" height="62.20" fill="none" stroke="#1a8598" stroke-width="1"/><line x1="236.70" y1="187.80" x2="258.50" y2="187.80" stroke="#1a8598" stroke-width="1"/><line x1="236.70" y1="187.20" x2="258.50" y2="187.20" stroke="#1a8598" stroke-width="1"/><line x1="236.70" y1="185.43" x2="258.50" y2="185.43" stroke="#1a8598" stroke-width="1"/><line x1="236.70" y1="182.56" x2="258.50" y2="182.56" stroke="#1a8598" stroke-width="1"/><line x1="236.70" y1="178.69" x2="258.50" y2="178.69" stroke="#1a8598" stroke-width="1"/><line x1="236.70" y1="173.98" x2="258.50" y2="173.98" stroke="#1a8598" stroke-width="1"/><line x1="236.70" y1="168.60" x2="258.50" y2="168.60" stroke="#1a8598" stroke-width="1"/><line x1="236.70" y1="162.77" x2="258.50" y2="162.77" stroke="#1a8598" stroke-width="1"/><line x1="236.70" y1="156.70" x2="258.50" y2="156.70" stroke="#1a8598" stroke-width="1"/><line x1="236.70" y1="150.63" x2="258.50" y2="150.63" stroke="#1a8598" stroke-width="1"/><line x1="236.70" y1="144.80" x2="258.50" y2="144.80" stroke="#1a8598" stroke-width="1"/><line x1="236.70" y1="139.42" x2="258.50" y2="139.42" stroke="#1a8598" stroke-width="1"/><line x1="236.70" y1="134.71" x2="258.50" y2="134.71" stroke="#1a8598" stroke-width="1"/><line x1="236.70" y1="130.84" x2="258.50" y2="130.84" stroke="#1a8598" stroke-width="1"/><line x1="236.70" y1="127.97" x2="258.50" y2="127.97" stroke="#1a8598" stroke-width="1"/><line x1="236.70" y1="126.20" x2="258.50" y2="126.20" stroke="#1a8598" stroke-width="1"/><line x1="236.70" y1="125.60" x2="258.50" y2="125.60" stroke="#1a8598" stroke-width="1"/><rect x="236.15" y="187.25" width="1.10" height="1.10" fill="#cfe8ee" fill-opacity="0.6"/><rect x="257.95" y="187.25" width="1.10" height="1.10" fill="#cfe8ee" fill-opacity="0.6"/><rect x="236.15" y="186.65" width="1.10" height="1.10" fill="#cfe8ee" fill-opacity="0.6"/><rect x="257.95" y="186.65" width="1.10" height="1.10" fill="#cfe8ee" fill-opacity="0.6"/><rect x="236.15" y="184.88" width="1.10" height="1.10" fill="#cfe8ee" fill-opacity="0.6"/><rect x="257.95" y="184.88" width="1.10" height="1.10" fill="#cfe8ee" fill-opacity="0.6"/><rect x="236.15" y="182.01" width="1.10" height="1.10" fill="#cfe8ee" fill-opacity="0.6"/><rect x="257.95" y="182.01" width="1.10" height="1.10" fill="#cfe8ee" fill-opacity="0.6"/><rect x="236.15" y="178.14" width="1.10" height="1.10" fill="#cfe8ee" fill-opacity="0.6"/><rect x="257.95" y="178.14" width="1.10" height="1.10" fill="#cfe8ee" fill-opacity="0.6"/><rect x="236.15" y="173.43" width="1.10" height="1.10" fill="#cfe8ee" fill-opacity="0.6"/><rect x="257.95" y="173.43" width="1.10" height="1.10" fill="#cfe8ee" fill-opacity="0.6"/><rect x="236.15" y="168.05" width="1.10" height="1.10" fill="#cfe8ee" fill-opacity="0.6"/><rect x="257.95" y="168.05" width="1.10" height="1.10" fill="#cfe8ee" fill-opacity="0.6"/><rect x="236.15" y="162.22" width="1.10" height="1.10" fill="#cfe8ee" fill-opacity="0.6"/><rect x="257.95" y="162.22" width="1.10" height="1.10" fill="#cfe8ee" fill-opacity="0.6"/><rect x="236.15" y="156.15" width="1.10" height="1.10" fill="#cfe8ee" fill-opacity="0.6"/><rect x="257.95" y="156.15" width="1.10" height="1.10" fill="#cfe8ee" fill-opacity="0.6"/><rect x="236.15" y="150.08" width="1.10" height="1.10" fill="#cfe8ee" fill-opacity="0.6"/><rect x="257.95" y="150.08" width="1.10" height="1.10" fill="#cfe8ee" fill-opacity="0.6"/><rect x="236.15" y="144.25" width="1.10" height="1.10" fill="#cfe8ee" fill-opacity="0.6"/><rect x="257.95" y="144.25" width="1.10" height="1.10" fill="#cfe8ee" fill-opacity="0.6"/><rect x="236.15" y="138.87" width="1.10" height="1.10" fill="#cfe8ee" fill-opacity="0.6"/><rect x="257.95" y="138.87" width="1.10" height="1.10" fill="#cfe8ee" fill-opacity="0.6"/><rect x="236.15" y="134.16" width="1.10" height="1.10" fill="#cfe8ee" fill-opacity="0.6"/><rect x="257.95" y="134.16" width="1.10" height="1.10" fill="#cfe8ee" fill-opacity="0.6"/><rect x="236.15" y="130.29" width="1.10" height="1.10" fill="#cfe8ee" fill-opacity="0.6"/><rect x="257.95" y="130.29" width="1.10" height="1.10" fill="#cfe8ee" fill-opacity="0.6"/><rect x="236.15" y="127.42" width="1.10" height="1.10" fill="#cfe8ee" fill-opacity="0.6"/><rect x="257.95" y="127.42" width="1.10" height="1.10" fill="#cfe8ee" fill-opacity="0.6"/><rect x="236.15" y="125.65" width="1.10" height="1.10" fill="#cfe8ee" fill-opacity="0.6"/><rect x="257.95" y="125.65" width="1.10" height="1.10" fill="#cfe8ee" fill-opacity="0.6"/><rect x="236.15" y="125.05" width="1.10" height="1.10" fill="#cfe8ee" fill-opacity="0.6"/><rect x="257.95" y="125.05" width="1.10" height="1.10" fill="#cfe8ee" fill-opacity="0.6"/><rect x="73.30" y="56.30" width="40.70" height="8.40" fill="none" stroke="#1a5a78" stroke-width="1"/><rect x="72.75" y="55.75" width="1.10" height="1.10" fill="#cfe8ee" fill-opacity="0.6"/><rect x="113.45" y="55.75" width="1.10" height="1.10" fill="#cfe8ee" fill-opacity="0.6"/><rect x="72.75" y="64.15" width="1.10" height="1.10" fill="#cfe8ee" fill-opacity="0.6"/><rect x="113.45" y="64.15" width="1.10" height="1.10" fill="#cfe8ee" fill-opacity="0.6"/><rect x="227.20" y="56.30" width="40.70" height="8.40" fill="none" stroke="#1a5a78" stroke-width="1"/><rect x="226.65" y="55.75" width="1.10" height="1.10" fill="#cfe8ee" fill-opacity="0.6"/><rect x="267.35" y="55.75" width="1.10" height="1.10" fill="#cfe8ee" fill-opacity="0.6"/><rect x="226.65" y="64.15" width="1.10" height="1.10" fill="#cfe8ee" fill-opacity="0.6"/><rect x="267.35" y="64.15" width="1.10" height="1.10" fill="#cfe8ee" fill-opacity="0.6"/><rect x="73.30" y="152.50" width="40.70" height="8.40" fill="none" stroke="#27a586" stroke-width="1"/><rect x="72.75" y="151.95" width="1.10" height="1.10" fill="#cfe8ee" fill-opacity="0.6"/><rect x="113.45" y="151.95" width="1.10" height="1.10" fill="#cfe8ee" fill-opacity="0.6"/><rect x="72.75" y="160.35" width="1.10" height="1.10" fill="#cfe8ee" fill-opacity="0.6"/><rect x="113.45" y="160.35" width="1.10" height="1.10" fill="#cfe8ee" fill-opacity="0.6"/><rect x="227.20" y="152.50" width="40.70" height="8.40" fill="none" stroke="#1a5a78" stroke-width="1"/><rect x="226.65" y="151.95" width="1.10" height="1.10" fill="#cfe8ee" fill-opacity="0.6"/><rect x="267.35" y="151.95" width="1.10" height="1.10" fill="#cfe8ee" fill-opacity="0.6"/><rect x="226.65" y="160.35" width="1.10" height="1.10" fill="#cfe8ee" fill-opacity="0.6"/><rect x="267.35" y="160.35" width="1.10" height="1.10" fill="#cfe8ee" fill-opacity="0.6"/><path d="M91.80 58.80 L95.20 62.20 M95.20 58.80 L91.80 62.20" stroke="#d0d0d0" stroke-width="0.9"/><path d="M245.90 58.80 L249.30 62.20 M249.30 58.80 L245.90 62.20" stroke="#d0d0d0" stroke-width="0.9"/><path d="M91.80 155.00 L95.20 158.40 M95.20 155.00 L91.80 158.40" stroke="#d0d0d0" stroke-width="0.9"/><path d="M245.90 155.00 L249.30 158.40 M249.30 155.00 L245.90 158.40" stroke="#d0d0d0" stroke-width="0.9"/><circle cx="170.5" cy="108.69999999999999" r="1.6" fill="#fff"/></svg>
<div class="a" style="left:412px;top:47px;width:369px;height:1px;background:#555"></div>
<div class="a" style="left:412px;top:47px;width:1px;height:221px;background:#555"></div>
<div class="a" style="left:781px;top:47px;width:1px;height:222px;background:#fff"></div>
<div class="a" style="left:412px;top:268px;width:370px;height:1px;background:#fff"></div>
<svg class="a" style="left:26px;top:285px" width="370" height="247" viewBox="0 0 370 247"><rect width="370" height="247" fill="#3f3f3f"/><line x1="56.20" y1="0" x2="56.20" y2="247" stroke="#484848" stroke-width="1"/><line x1="118.10" y1="0" x2="118.10" y2="247" stroke="#484848" stroke-width="1"/><line x1="0" y1="60.60" x2="370" y2="60.60" stroke="#484848" stroke-width="1"/><line x1="180.00" y1="0" x2="180.00" y2="247" stroke="#484848" stroke-width="1"/><line x1="0" y1="122.50" x2="370" y2="122.50" stroke="#484848" stroke-width="1"/><line x1="241.90" y1="0" x2="241.90" y2="247" stroke="#484848" stroke-width="1"/><line x1="0" y1="184.40" x2="370" y2="184.40" stroke="#484848" stroke-width="1"/><line x1="303.80" y1="0" x2="303.80" y2="247" stroke="#484848" stroke-width="1"/><line x1="0" y1="246.30" x2="370" y2="246.30" stroke="#484848" stroke-width="1"/><line x1="365.70" y1="0" x2="365.70" y2="247" stroke="#484848" stroke-width="1"/><line x1="180.00" y1="0" x2="180.00" y2="247" stroke="#d8d8d8" stroke-width="1.3"/><circle cx="83.50" cy="114.70" r="61.7" fill="none" stroke="#17808e" stroke-width="1"/><rect x="144.65" y="114.15" width="1.10" height="1.10" fill="#cfe8ee" fill-opacity="0.6"/><rect x="143.46" y="126.19" width="1.10" height="1.10" fill="#cfe8ee" fill-opacity="0.6"/><rect x="139.95" y="137.76" width="1.10" height="1.10" fill="#cfe8ee" fill-opacity="0.6"/><rect x="134.25" y="148.43" width="1.10" height="1.10" fill="#cfe8ee" fill-opacity="0.6"/><rect x="126.58" y="157.78" width="1.10" height="1.10" fill="#cfe8ee" fill-opacity="0.6"/><rect x="117.23" y="165.45" width="1.10" height="1.10" fill="#cfe8ee" fill-opacity="0.6"/><rect x="106.56" y="171.15" width="1.10" height="1.10" fill="#cfe8ee" fill-opacity="0.6"/><rect x="94.99" y="174.66" width="1.10" height="1.10" fill="#cfe8ee" fill-opacity="0.6"/><rect x="82.95" y="175.85" width="1.10" height="1.10" fill="#cfe8ee" fill-opacity="0.6"/><rect x="70.91" y="174.66" width="1.10" height="1.10" fill="#cfe8ee" fill-opacity="0.6"/><rect x="59.34" y="171.15" width="1.10" height="1.10" fill="#cfe8ee" fill-opacity="0.6"/><rect x="48.67" y="165.45" width="1.10" height="1.10" fill="#cfe8ee" fill-opacity="0.6"/><rect x="39.32" y="157.78" width="1.10" height="1.10" fill="#cfe8ee" fill-opacity="0.6"/><rect x="31.65" y="148.43" width="1.10" height="1.10" fill="#cfe8ee" fill-opacity="0.6"/><rect x="25.95" y="137.76" width="1.10" height="1.10" fill="#cfe8ee" fill-opacity="0.6"/><rect x="22.44" y="126.19" width="1.10" height="1.10" fill="#cfe8ee" fill-opacity="0.6"/><rect x="21.25" y="114.15" width="1.10" height="1.10" fill="#cfe8ee" fill-opacity="0.6"/><rect x="22.44" y="102.11" width="1.10" height="1.10" fill="#cfe8ee" fill-opacity="0.6"/><rect x="25.95" y="90.54" width="1.10" height="1.10" fill="#cfe8ee" fill-opacity="0.6"/><rect x="31.65" y="79.87" width="1.10" height="1.10" fill="#cfe8ee" fill-opacity="0.6"/><rect x="39.32" y="70.52" width="1.10" height="1.10" fill="#cfe8ee" fill-opacity="0.6"/><rect x="48.67" y="62.85" width="1.10" height="1.10" fill="#cfe8ee" fill-opacity="0.6"/><rect x="59.34" y="57.15" width="1.10" height="1.10" fill="#cfe8ee" fill-opacity="0.6"/><rect x="70.91" y="53.64" width="1.10" height="1.10" fill="#cfe8ee" fill-opacity="0.6"/><rect x="82.95" y="52.45" width="1.10" height="1.10" fill="#cfe8ee" fill-opacity="0.6"/><rect x="94.99" y="53.64" width="1.10" height="1.10" fill="#cfe8ee" fill-opacity="0.6"/><rect x="106.56" y="57.15" width="1.10" height="1.10" fill="#cfe8ee" fill-opacity="0.6"/><rect x="117.23" y="62.85" width="1.10" height="1.10" fill="#cfe8ee" fill-opacity="0.6"/><rect x="126.58" y="70.52" width="1.10" height="1.10" fill="#cfe8ee" fill-opacity="0.6"/><rect x="134.25" y="79.87" width="1.10" height="1.10" fill="#cfe8ee" fill-opacity="0.6"/><rect x="139.95" y="90.54" width="1.10" height="1.10" fill="#cfe8ee" fill-opacity="0.6"/><rect x="143.46" y="102.11" width="1.10" height="1.10" fill="#cfe8ee" fill-opacity="0.6"/><circle cx="276.70" cy="114.70" r="61.7" fill="none" stroke="#17808e" stroke-width="1"/><rect x="337.85" y="114.15" width="1.10" height="1.10" fill="#cfe8ee" fill-opacity="0.6"/><rect x="336.66" y="126.19" width="1.10" height="1.10" fill="#cfe8ee" fill-opacity="0.6"/><rect x="333.15" y="137.76" width="1.10" height="1.10" fill="#cfe8ee" fill-opacity="0.6"/><rect x="327.45" y="148.43" width="1.10" height="1.10" fill="#cfe8ee" fill-opacity="0.6"/><rect x="319.78" y="157.78" width="1.10" height="1.10" fill="#cfe8ee" fill-opacity="0.6"/><rect x="310.43" y="165.45" width="1.10" height="1.10" fill="#cfe8ee" fill-opacity="0.6"/><rect x="299.76" y="171.15" width="1.10" height="1.10" fill="#cfe8ee" fill-opacity="0.6"/><rect x="288.19" y="174.66" width="1.10" height="1.10" fill="#cfe8ee" fill-opacity="0.6"/><rect x="276.15" y="175.85" width="1.10" height="1.10" fill="#cfe8ee" fill-opacity="0.6"/><rect x="264.11" y="174.66" width="1.10" height="1.10" fill="#cfe8ee" fill-opacity="0.6"/><rect x="252.54" y="171.15" width="1.10" height="1.10" fill="#cfe8ee" fill-opacity="0.6"/><rect x="241.87" y="165.45" width="1.10" height="1.10" fill="#cfe8ee" fill-opacity="0.6"/><rect x="232.52" y="157.78" width="1.10" height="1.10" fill="#cfe8ee" fill-opacity="0.6"/><rect x="224.85" y="148.43" width="1.10" height="1.10" fill="#cfe8ee" fill-opacity="0.6"/><rect x="219.15" y="137.76" width="1.10" height="1.10" fill="#cfe8ee" fill-opacity="0.6"/><rect x="215.64" y="126.19" width="1.10" height="1.10" fill="#cfe8ee" fill-opacity="0.6"/><rect x="214.45" y="114.15" width="1.10" height="1.10" fill="#cfe8ee" fill-opacity="0.6"/><rect x="215.64" y="102.11" width="1.10" height="1.10" fill="#cfe8ee" fill-opacity="0.6"/><rect x="219.15" y="90.54" width="1.10" height="1.10" fill="#cfe8ee" fill-opacity="0.6"/><rect x="224.85" y="79.87" width="1.10" height="1.10" fill="#cfe8ee" fill-opacity="0.6"/><rect x="232.52" y="70.52" width="1.10" height="1.10" fill="#cfe8ee" fill-opacity="0.6"/><rect x="241.87" y="62.85" width="1.10" height="1.10" fill="#cfe8ee" fill-opacity="0.6"/><rect x="252.54" y="57.15" width="1.10" height="1.10" fill="#cfe8ee" fill-opacity="0.6"/><rect x="264.11" y="53.64" width="1.10" height="1.10" fill="#cfe8ee" fill-opacity="0.6"/><rect x="276.15" y="52.45" width="1.10" height="1.10" fill="#cfe8ee" fill-opacity="0.6"/><rect x="288.19" y="53.64" width="1.10" height="1.10" fill="#cfe8ee" fill-opacity="0.6"/><rect x="299.76" y="57.15" width="1.10" height="1.10" fill="#cfe8ee" fill-opacity="0.6"/><rect x="310.43" y="62.85" width="1.10" height="1.10" fill="#cfe8ee" fill-opacity="0.6"/><rect x="319.78" y="70.52" width="1.10" height="1.10" fill="#cfe8ee" fill-opacity="0.6"/><rect x="327.45" y="79.87" width="1.10" height="1.10" fill="#cfe8ee" fill-opacity="0.6"/><rect x="333.15" y="90.54" width="1.10" height="1.10" fill="#cfe8ee" fill-opacity="0.6"/><rect x="336.66" y="102.11" width="1.10" height="1.10" fill="#cfe8ee" fill-opacity="0.6"/><rect x="75.50" y="106.70" width="16.00" height="16.00" fill="none" stroke="#17808e" stroke-width="1"/><rect x="74.95" y="106.15" width="1.10" height="1.10" fill="#cfe8ee" fill-opacity="0.6"/><rect x="90.95" y="106.15" width="1.10" height="1.10" fill="#cfe8ee" fill-opacity="0.6"/><rect x="74.95" y="122.15" width="1.10" height="1.10" fill="#cfe8ee" fill-opacity="0.6"/><rect x="90.95" y="122.15" width="1.10" height="1.10" fill="#cfe8ee" fill-opacity="0.6"/><rect x="268.70" y="106.70" width="16.00" height="16.00" fill="none" stroke="#27a586" stroke-width="1"/><rect x="268.15" y="106.15" width="1.10" height="1.10" fill="#cfe8ee" fill-opacity="0.6"/><rect x="284.15" y="106.15" width="1.10" height="1.10" fill="#cfe8ee" fill-opacity="0.6"/><rect x="268.15" y="122.15" width="1.10" height="1.10" fill="#cfe8ee" fill-opacity="0.6"/><rect x="284.15" y="122.15" width="1.10" height="1.10" fill="#cfe8ee" fill-opacity="0.6"/><rect x="118.20" y="97.30" width="123.60" height="35.30" fill="none" stroke="#1f7a5c" stroke-width="1"/><rect x="117.65" y="96.75" width="1.10" height="1.10" fill="#cfe8ee" fill-opacity="0.6"/><rect x="241.25" y="96.75" width="1.10" height="1.10" fill="#cfe8ee" fill-opacity="0.6"/><rect x="117.65" y="132.05" width="1.10" height="1.10" fill="#cfe8ee" fill-opacity="0.6"/><rect x="241.25" y="132.05" width="1.10" height="1.10" fill="#cfe8ee" fill-opacity="0.6"/><path d="M81.80 113.00 L85.20 116.40 M85.20 113.00 L81.80 116.40" stroke="#d0d0d0" stroke-width="0.9"/><path d="M178.30 113.00 L181.70 116.40 M181.70 113.00 L178.30 116.40" stroke="#d0d0d0" stroke-width="0.9"/><path d="M275.00 113.00 L278.40 116.40 M278.40 113.00 L275.00 116.40" stroke="#d0d0d0" stroke-width="0.9"/></svg>
<div class="a" style="left:26px;top:285px;width:370px;height:1px;background:#555"></div>
<div class="a" style="left:26px;top:285px;width:1px;height:247px;background:#555"></div>
<div class="a" style="left:396px;top:285px;width:1px;height:248px;background:#fff"></div>
<div class="a" style="left:26px;top:532px;width:371px;height:1px;background:#fff"></div>
<svg class="a" style="left:412px;top:285px" width="369" height="247" viewBox="0 0 369 247"><rect width="369" height="247" fill="#3f3f3f"/><line x1="34.30" y1="0" x2="34.30" y2="247" stroke="#484848" stroke-width="1"/><line x1="85.70" y1="0" x2="85.70" y2="247" stroke="#484848" stroke-width="1"/><line x1="0" y1="12.70" x2="369" y2="12.70" stroke="#484848" stroke-width="1"/><line x1="137.10" y1="0" x2="137.10" y2="247" stroke="#484848" stroke-width="1"/><line x1="0" y1="64.10" x2="369" y2="64.10" stroke="#484848" stroke-width="1"/><line x1="188.50" y1="0" x2="188.50" y2="247" stroke="#484848" stroke-width="1"/><line x1="0" y1="115.50" x2="369" y2="115.50" stroke="#484848" stroke-width="1"/><line x1="239.90" y1="0" x2="239.90" y2="247" stroke="#484848" stroke-width="1"/><line x1="0" y1="166.90" x2="369" y2="166.90" stroke="#484848" stroke-width="1"/><line x1="291.30" y1="0" x2="291.30" y2="247" stroke="#484848" stroke-width="1"/><line x1="0" y1="218.30" x2="369" y2="218.30" stroke="#484848" stroke-width="1"/><line x1="342.70" y1="0" x2="342.70" y2="247" stroke="#484848" stroke-width="1"/><line x1="188.40" y1="0" x2="188.40" y2="247" stroke="#d8d8d8" stroke-width="1.3"/><rect x="43.00" y="57.60" width="35.50" height="103.00" fill="none" stroke="#1a8598" stroke-width="1"/><line x1="43.00" y1="160.60" x2="78.50" y2="160.60" stroke="#1a8598" stroke-width="1"/><line x1="43.00" y1="159.61" x2="78.50" y2="159.61" stroke="#1a8598" stroke-width="1"/><line x1="43.00" y1="156.68" x2="78.50" y2="156.68" stroke="#1a8598" stroke-width="1"/><line x1="43.00" y1="151.92" x2="78.50" y2="151.92" stroke="#1a8598" stroke-width="1"/><line x1="43.00" y1="145.52" x2="78.50" y2="145.52" stroke="#1a8598" stroke-width="1"/><line x1="43.00" y1="137.71" x2="78.50" y2="137.71" stroke="#1a8598" stroke-width="1"/><line x1="43.00" y1="128.81" x2="78.50" y2="128.81" stroke="#1a8598" stroke-width="1"/><line x1="43.00" y1="119.15" x2="78.50" y2="119.15" stroke="#1a8598" stroke-width="1"/><line x1="43.00" y1="109.10" x2="78.50" y2="109.10" stroke="#1a8598" stroke-width="1"/><line x1="43.00" y1="99.05" x2="78.50" y2="99.05" stroke="#1a8598" stroke-width="1"/><line x1="43.00" y1="89.39" x2="78.50" y2="89.39" stroke="#1a8598" stroke-width="1"/><line x1="43.00" y1="80.49" x2="78.50" y2="80.49" stroke="#1a8598" stroke-width="1"/><line x1="43.00" y1="72.68" x2="78.50" y2="72.68" stroke="#1a8598" stroke-width="1"/><line x1="43.00" y1="66.28" x2="78.50" y2="66.28" stroke="#1a8598" stroke-width="1"/><line x1="43.00" y1="61.52" x2="78.50" y2="61.52" stroke="#1a8598" stroke-width="1"/><line x1="43.00" y1="58.59" x2="78.50" y2="58.59" stroke="#1a8598" stroke-width="1"/><line x1="43.00" y1="57.60" x2="78.50" y2="57.60" stroke="#1a8598" stroke-width="1"/><rect x="42.45" y="160.05" width="1.10" height="1.10" fill="#cfe8ee" fill-opacity="0.6"/><rect x="77.95" y="160.05" width="1.10" height="1.10" fill="#cfe8ee" fill-opacity="0.6"/><rect x="42.45" y="159.06" width="1.10" height="1.10" fill="#cfe8ee" fill-opacity="0.6"/><rect x="77.95" y="159.06" width="1.10" height="1.10" fill="#cfe8ee" fill-opacity="0.6"/><rect x="42.45" y="156.13" width="1.10" height="1.10" fill="#cfe8ee" fill-opacity="0.6"/><rect x="77.95" y="156.13" width="1.10" height="1.10" fill="#cfe8ee" fill-opacity="0.6"/><rect x="42.45" y="151.37" width="1.10" height="1.10" fill="#cfe8ee" fill-opacity="0.6"/><rect x="77.95" y="151.37" width="1.10" height="1.10" fill="#cfe8ee" fill-opacity="0.6"/><rect x="42.45" y="144.97" width="1.10" height="1.10" fill="#cfe8ee" fill-opacity="0.6"/><rect x="77.95" y="144.97" width="1.10" height="1.10" fill="#cfe8ee" fill-opacity="0.6"/><rect x="42.45" y="137.16" width="1.10" height="1.10" fill="#cfe8ee" fill-opacity="0.6"/><rect x="77.95" y="137.16" width="1.10" height="1.10" fill="#cfe8ee" fill-opacity="0.6"/><rect x="42.45" y="128.26" width="1.10" height="1.10" fill="#cfe8ee" fill-opacity="0.6"/><rect x="77.95" y="128.26" width="1.10" height="1.10" fill="#cfe8ee" fill-opacity="0.6"/><rect x="42.45" y="118.60" width="1.10" height="1.10" fill="#cfe8ee" fill-opacity="0.6"/><rect x="77.95" y="118.60" width="1.10" height="1.10" fill="#cfe8ee" fill-opacity="0.6"/><rect x="42.45" y="108.55" width="1.10" height="1.10" fill="#cfe8ee" fill-opacity="0.6"/><rect x="77.95" y="108.55" width="1.10" height="1.10" fill="#cfe8ee" fill-opacity="0.6"/><rect x="42.45" y="98.50" width="1.10" height="1.10" fill="#cfe8ee" fill-opacity="0.6"/><rect x="77.95" y="98.50" width="1.10" height="1.10" fill="#cfe8ee" fill-opacity="0.6"/><rect x="42.45" y="88.84" width="1.10" height="1.10" fill="#cfe8ee" fill-opacity="0.6"/><rect x="77.95" y="88.84" width="1.10" height="1.10" fill="#cfe8ee" fill-opacity="0.6"/><rect x="42.45" y="79.94" width="1.10" height="1.10" fill="#cfe8ee" fill-opacity="0.6"/><rect x="77.95" y="79.94" width="1.10" height="1.10" fill="#cfe8ee" fill-opacity="0.6"/><rect x="42.45" y="72.13" width="1.10" height="1.10" fill="#cfe8ee" fill-opacity="0.6"/><rect x="77.95" y="72.13" width="1.10" height="1.10" fill="#cfe8ee" fill-opacity="0.6"/><rect x="42.45" y="65.73" width="1.10" height="1.10" fill="#cfe8ee" fill-opacity="0.6"/><rect x="77.95" y="65.73" width="1.10" height="1.10" fill="#cfe8ee" fill-opacity="0.6"/><rect x="42.45" y="60.97" width="1.10" height="1.10" fill="#cfe8ee" fill-opacity="0.6"/><rect x="77.95" y="60.97" width="1.10" height="1.10" fill="#cfe8ee" fill-opacity="0.6"/><rect x="42.45" y="58.04" width="1.10" height="1.10" fill="#cfe8ee" fill-opacity="0.6"/><rect x="77.95" y="58.04" width="1.10" height="1.10" fill="#cfe8ee" fill-opacity="0.6"/><rect x="42.45" y="57.05" width="1.10" height="1.10" fill="#cfe8ee" fill-opacity="0.6"/><rect x="77.95" y="57.05" width="1.10" height="1.10" fill="#cfe8ee" fill-opacity="0.6"/><rect x="299.20" y="57.60" width="36.00" height="103.00" fill="none" stroke="#1a8598" stroke-width="1"/><line x1="299.20" y1="160.60" x2="335.20" y2="160.60" stroke="#1a8598" stroke-width="1"/><line x1="299.20" y1="159.61" x2="335.20" y2="159.61" stroke="#1a8598" stroke-width="1"/><line x1="299.20" y1="156.68" x2="335.20" y2="156.68" stroke="#1a8598" stroke-width="1"/><line x1="299.20" y1="151.92" x2="335.20" y2="151.92" stroke="#1a8598" stroke-width="1"/><line x1="299.20" y1="145.52" x2="335.20" y2="145.52" stroke="#1a8598" stroke-width="1"/><line x1="299.20" y1="137.71" x2="335.20" y2="137.71" stroke="#1a8598" stroke-width="1"/><line x1="299.20" y1="128.81" x2="335.20" y2="128.81" stroke="#1a8598" stroke-width="1"/><line x1="299.20" y1="119.15" x2="335.20" y2="119.15" stroke="#1a8598" stroke-width="1"/><line x1="299.20" y1="109.10" x2="335.20" y2="109.10" stroke="#1a8598" stroke-width="1"/><line x1="299.20" y1="99.05" x2="335.20" y2="99.05" stroke="#1a8598" stroke-width="1"/><line x1="299.20" y1="89.39" x2="335.20" y2="89.39" stroke="#1a8598" stroke-width="1"/><line x1="299.20" y1="80.49" x2="335.20" y2="80.49" stroke="#1a8598" stroke-width="1"/><line x1="299.20" y1="72.68" x2="335.20" y2="72.68" stroke="#1a8598" stroke-width="1"/><line x1="299.20" y1="66.28" x2="335.20" y2="66.28" stroke="#1a8598" stroke-width="1"/><line x1="299.20" y1="61.52" x2="335.20" y2="61.52" stroke="#1a8598" stroke-width="1"/><line x1="299.20" y1="58.59" x2="335.20" y2="58.59" stroke="#1a8598" stroke-width="1"/><line x1="299.20" y1="57.60" x2="335.20" y2="57.60" stroke="#1a8598" stroke-width="1"/><rect x="298.65" y="160.05" width="1.10" height="1.10" fill="#cfe8ee" fill-opacity="0.6"/><rect x="334.65" y="160.05" width="1.10" height="1.10" fill="#cfe8ee" fill-opacity="0.6"/><rect x="298.65" y="159.06" width="1.10" height="1.10" fill="#cfe8ee" fill-opacity="0.6"/><rect x="334.65" y="159.06" width="1.10" height="1.10" fill="#cfe8ee" fill-opacity="0.6"/><rect x="298.65" y="156.13" width="1.10" height="1.10" fill="#cfe8ee" fill-opacity="0.6"/><rect x="334.65" y="156.13" width="1.10" height="1.10" fill="#cfe8ee" fill-opacity="0.6"/><rect x="298.65" y="151.37" width="1.10" height="1.10" fill="#cfe8ee" fill-opacity="0.6"/><rect x="334.65" y="151.37" width="1.10" height="1.10" fill="#cfe8ee" fill-opacity="0.6"/><rect x="298.65" y="144.97" width="1.10" height="1.10" fill="#cfe8ee" fill-opacity="0.6"/><rect x="334.65" y="144.97" width="1.10" height="1.10" fill="#cfe8ee" fill-opacity="0.6"/><rect x="298.65" y="137.16" width="1.10" height="1.10" fill="#cfe8ee" fill-opacity="0.6"/><rect x="334.65" y="137.16" width="1.10" height="1.10" fill="#cfe8ee" fill-opacity="0.6"/><rect x="298.65" y="128.26" width="1.10" height="1.10" fill="#cfe8ee" fill-opacity="0.6"/><rect x="334.65" y="128.26" width="1.10" height="1.10" fill="#cfe8ee" fill-opacity="0.6"/><rect x="298.65" y="118.60" width="1.10" height="1.10" fill="#cfe8ee" fill-opacity="0.6"/><rect x="334.65" y="118.60" width="1.10" height="1.10" fill="#cfe8ee" fill-opacity="0.6"/><rect x="298.65" y="108.55" width="1.10" height="1.10" fill="#cfe8ee" fill-opacity="0.6"/><rect x="334.65" y="108.55" width="1.10" height="1.10" fill="#cfe8ee" fill-opacity="0.6"/><rect x="298.65" y="98.50" width="1.10" height="1.10" fill="#cfe8ee" fill-opacity="0.6"/><rect x="334.65" y="98.50" width="1.10" height="1.10" fill="#cfe8ee" fill-opacity="0.6"/><rect x="298.65" y="88.84" width="1.10" height="1.10" fill="#cfe8ee" fill-opacity="0.6"/><rect x="334.65" y="88.84" width="1.10" height="1.10" fill="#cfe8ee" fill-opacity="0.6"/><rect x="298.65" y="79.94" width="1.10" height="1.10" fill="#cfe8ee" fill-opacity="0.6"/><rect x="334.65" y="79.94" width="1.10" height="1.10" fill="#cfe8ee" fill-opacity="0.6"/><rect x="298.65" y="72.13" width="1.10" height="1.10" fill="#cfe8ee" fill-opacity="0.6"/><rect x="334.65" y="72.13" width="1.10" height="1.10" fill="#cfe8ee" fill-opacity="0.6"/><rect x="298.65" y="65.73" width="1.10" height="1.10" fill="#cfe8ee" fill-opacity="0.6"/><rect x="334.65" y="65.73" width="1.10" height="1.10" fill="#cfe8ee" fill-opacity="0.6"/><rect x="298.65" y="60.97" width="1.10" height="1.10" fill="#cfe8ee" fill-opacity="0.6"/><rect x="334.65" y="60.97" width="1.10" height="1.10" fill="#cfe8ee" fill-opacity="0.6"/><rect x="298.65" y="58.04" width="1.10" height="1.10" fill="#cfe8ee" fill-opacity="0.6"/><rect x="334.65" y="58.04" width="1.10" height="1.10" fill="#cfe8ee" fill-opacity="0.6"/><rect x="298.65" y="57.05" width="1.10" height="1.10" fill="#cfe8ee" fill-opacity="0.6"/><rect x="334.65" y="57.05" width="1.10" height="1.10" fill="#cfe8ee" fill-opacity="0.6"/><rect x="27.40" y="102.40" width="66.40" height="13.30" fill="none" stroke="#27a586" stroke-width="1"/><rect x="26.85" y="101.85" width="1.10" height="1.10" fill="#cfe8ee" fill-opacity="0.6"/><rect x="93.25" y="101.85" width="1.10" height="1.10" fill="#cfe8ee" fill-opacity="0.6"/><rect x="26.85" y="115.15" width="1.10" height="1.10" fill="#cfe8ee" fill-opacity="0.6"/><rect x="93.25" y="115.15" width="1.10" height="1.10" fill="#cfe8ee" fill-opacity="0.6"/><rect x="284.00" y="102.40" width="66.80" height="13.30" fill="none" stroke="#1a5a78" stroke-width="1"/><rect x="283.45" y="101.85" width="1.10" height="1.10" fill="#cfe8ee" fill-opacity="0.6"/><rect x="350.25" y="101.85" width="1.10" height="1.10" fill="#cfe8ee" fill-opacity="0.6"/><rect x="283.45" y="115.15" width="1.10" height="1.10" fill="#cfe8ee" fill-opacity="0.6"/><rect x="350.25" y="115.15" width="1.10" height="1.10" fill="#cfe8ee" fill-opacity="0.6"/><rect x="137.50" y="94.20" width="103.10" height="29.50" fill="none" stroke="#1f7a5c" stroke-width="1"/><rect x="136.95" y="93.65" width="1.10" height="1.10" fill="#cfe8ee" fill-opacity="0.6"/><rect x="240.05" y="93.65" width="1.10" height="1.10" fill="#cfe8ee" fill-opacity="0.6"/><rect x="136.95" y="123.15" width="1.10" height="1.10" fill="#cfe8ee" fill-opacity="0.6"/><rect x="240.05" y="123.15" width="1.10" height="1.10" fill="#cfe8ee" fill-opacity="0.6"/><path d="M59.30 107.30 L62.70 110.70 M62.70 107.30 L59.30 110.70" stroke="#d0d0d0" stroke-width="0.9"/><path d="M186.70 107.30 L190.10 110.70 M190.10 107.30 L186.70 110.70" stroke="#d0d0d0" stroke-width="0.9"/><path d="M314.80 107.30 L318.20 110.70 M318.20 107.30 L314.80 110.70" stroke="#d0d0d0" stroke-width="0.9"/></svg>
<div class="a" style="left:412px;top:285px;width:369px;height:1px;background:#555"></div>
<div class="a" style="left:412px;top:285px;width:1px;height:247px;background:#555"></div>
<div class="a" style="left:781px;top:285px;width:1px;height:248px;background:#fff"></div>
<div class="a" style="left:412px;top:532px;width:370px;height:1px;background:#fff"></div>
<svg class="a" style="left:413px;top:272px" width="8" height="8" viewBox="-4 -4 8 8"><path d="M1.3 -2.5 L-1.3 0 L1.3 2.5" fill="none" stroke="#606060" stroke-width="1.3"/></svg>
<svg class="a" style="left:773px;top:272px" width="8" height="8" viewBox="-4 -4 8 8"><path d="M-1.3 -2.5 L1.3 0 L-1.3 2.5" fill="none" stroke="#606060" stroke-width="1.3"/></svg>
<div class="a" style="left:591px;top:271px;width:11px;height:10px;background:#cdcdcd"></div>
<svg class="a" style="left:784px;top:48px" width="8" height="8" viewBox="-4 -4 8 8"><path d="M-2.5 1.3 L0 -1.3 L2.5 1.3" fill="none" stroke="#606060" stroke-width="1.3"/></svg>
<svg class="a" style="left:784px;top:260px" width="8" height="8" viewBox="-4 -4 8 8"><path d="M-2.5 -1.3 L0 1.3 L2.5 -1.3" fill="none" stroke="#606060" stroke-width="1.3"/></svg>
<div class="a" style="left:783px;top:153px;width:10px;height:11px;background:#cdcdcd"></div>
<svg class="a" style="left:398px;top:286px" width="8" height="8" viewBox="-4 -4 8 8"><path d="M-2.5 1.3 L0 -1.3 L2.5 1.3" fill="none" stroke="#606060" stroke-width="1.3"/></svg>
<svg class="a" style="left:398px;top:524px" width="8" height="8" viewBox="-4 -4 8 8"><path d="M-2.5 -1.3 L0 1.3 L2.5 -1.3" fill="none" stroke="#606060" stroke-width="1.3"/></svg>
<div class="a" style="left:398px;top:404px;width:10px;height:11px;background:#cdcdcd"></div>
<svg class="a" style="left:27px;top:535px" width="8" height="8" viewBox="-4 -4 8 8"><path d="M1.3 -2.5 L-1.3 0 L1.3 2.5" fill="none" stroke="#606060" stroke-width="1.3"/></svg>
<svg class="a" style="left:388px;top:535px" width="8" height="8" viewBox="-4 -4 8 8"><path d="M-1.3 -2.5 L1.3 0 L-1.3 2.5" fill="none" stroke="#606060" stroke-width="1.3"/></svg>
<div class="a" style="left:206px;top:534px;width:11px;height:11px;background:#cdcdcd"></div>
<svg class="a" style="left:784px;top:286px" width="8" height="8" viewBox="-4 -4 8 8"><path d="M-2.5 1.3 L0 -1.3 L2.5 1.3" fill="none" stroke="#606060" stroke-width="1.3"/></svg>
<svg class="a" style="left:784px;top:524px" width="8" height="8" viewBox="-4 -4 8 8"><path d="M-2.5 -1.3 L0 1.3 L2.5 -1.3" fill="none" stroke="#606060" stroke-width="1.3"/></svg>
<div class="a" style="left:783px;top:404px;width:10px;height:11px;background:#cdcdcd"></div>
<svg class="a" style="left:413px;top:535px" width="8" height="8" viewBox="-4 -4 8 8"><path d="M1.3 -2.5 L-1.3 0 L1.3 2.5" fill="none" stroke="#606060" stroke-width="1.3"/></svg>
<svg class="a" style="left:773px;top:535px" width="8" height="8" viewBox="-4 -4 8 8"><path d="M-1.3 -2.5 L1.3 0 L-1.3 2.5" fill="none" stroke="#606060" stroke-width="1.3"/></svg>
<div class="a" style="left:591px;top:534px;width:11px;height:11px;background:#cdcdcd"></div>
<div class="a" style="left:797px;top:62px;width:201px;height:485px;background:#fff"></div>
<div class="a" style="left:997px;top:62px;width:1px;height:485px;background:#e3e3e3"></div>
<div class="a" style="left:797px;top:546px;width:201px;height:1px;background:#e3e3e3"></div>
<div class="a" style="left:798px;top:48px;width:33px;height:14px;background:#f0f0f0;border:1px solid #e1e1e1;border-bottom:none"></div>
<div class="a" style="left:831px;top:48px;width:31px;height:14px;background:#f0f0f0;border:1px solid #e1e1e1;border-bottom:none"></div>
<div class="a" style="left:862px;top:47px;width:32px;height:16px;background:#fff;border:1px solid #e3e3e3;border-bottom:none"></div>
<div class="a" style="left:894px;top:48px;width:29px;height:14px;background:#f0f0f0;border:1px solid #e1e1e1;border-bottom:none"></div>
<div class="a" style="left:799px;top:62px;width:198px;height:1px;background:#6e6e6e"></div>
<div class="a" style="left:799px;top:62px;width:1px;height:264px;background:#6e6e6e"></div>
<div class="a" style="left:799px;top:326px;width:198px;height:1px;background:#e6e6e6"></div>
<div class="a" style="left:802.0px;top:66.2px;width:6px;height:6px;border:1px solid #a8a8a8;background:#f6f6f6"></div>
<div class="a" style="left:803.5px;top:68.7px;width:3px;height:1px;background:#4a6ab0"></div>
<svg class="a" style="left:813px;top:63.2px" width="13" height="12" viewBox="0 0 13 12"><rect x="3" y="1" width="6" height="5.5" fill="#333"/><path d="M1 11.5 L4 6.5 L7 11.5 Z" fill="#222"/><circle cx="9.2" cy="8.8" r="2.4" fill="#222"/></svg>
<div class="a" style="left:815.5px;top:79.2px;width:6px;height:6px;border:1px solid #a8a8a8;background:#f6f6f6"></div>
<div class="a" style="left:817.0px;top:81.8px;width:3px;height:1px;background:#4a6ab0"></div>
<svg class="a" style="left:827px;top:77.2px" width="11" height="10" viewBox="0 0 11 10"><path d="M1 2.5 H4 L5 3.5 H10 V9.5 H1 Z" fill="#b98b4c"/><rect x="1" y="4.2" width="9.5" height="1.3" fill="#e6d6b6"/><rect x="1" y="5.5" width="9.5" height="4" fill="#c49552"/><rect x="6" y="1.5" width="4" height="1.5" fill="#d8c8a8"/></svg>
<div class="a" style="left:838.3px;top:76.5px;width:14.5px;height:11.5px;background:#3399ff"></div>
<svg class="a" style="left:841px;top:90px" width="10" height="11" viewBox="0 0 10 11"><path d="M5 0.7 L9.3 3.1 V7.9 L5 10.3 L0.7 7.9 V3.1 Z M0.9 3.2 L5 5.5 L9.1 3.2 M5 5.5 V10.2" fill="none" stroke="#2a2a2a" stroke-width="0.95" stroke-linejoin="round"/></svg>
<svg class="a" style="left:841px;top:103px" width="10" height="11" viewBox="0 0 10 11"><path d="M5 0.7 L9.3 3.1 V7.9 L5 10.3 L0.7 7.9 V3.1 Z M0.9 3.2 L5 5.5 L9.1 3.2 M5 5.5 V10.2" fill="none" stroke="#2a2a2a" stroke-width="0.95" stroke-linejoin="round"/></svg>
<svg class="a" style="left:841px;top:116px" width="10" height="11" viewBox="0 0 10 11"><path d="M5 0.7 L9.3 3.1 V7.9 L5 10.3 L0.7 7.9 V3.1 Z M0.9 3.2 L5 5.5 L9.1 3.2 M5 5.5 V10.2" fill="none" stroke="#2a2a2a" stroke-width="0.95" stroke-linejoin="round"/></svg>
<svg class="a" style="left:841px;top:129px" width="10" height="11" viewBox="0 0 10 11"><path d="M5 0.7 L9.3 3.1 V7.9 L5 10.3 L0.7 7.9 V3.1 Z M0.9 3.2 L5 5.5 L9.1 3.2 M5 5.5 V10.2" fill="none" stroke="#2a2a2a" stroke-width="0.95" stroke-linejoin="round"/></svg>
<svg class="a" style="left:841px;top:142px" width="10" height="11" viewBox="0 0 10 11"><path d="M5 0.7 L9.3 3.1 V7.9 L5 10.3 L0.7 7.9 V3.1 Z M0.9 3.2 L5 5.5 L9.1 3.2 M5 5.5 V10.2" fill="none" stroke="#2a2a2a" stroke-width="0.95" stroke-linejoin="round"/></svg>
<svg class="a" style="left:841px;top:155px" width="10" height="11" viewBox="0 0 10 11"><path d="M5 0.7 L9.3 3.1 V7.9 L5 10.3 L0.7 7.9 V3.1 Z M0.9 3.2 L5 5.5 L9.1 3.2 M5 5.5 V10.2" fill="none" stroke="#2a2a2a" stroke-width="0.95" stroke-linejoin="round"/></svg>
<svg class="a" style="left:841px;top:168px" width="10" height="11" viewBox="0 0 10 11"><path d="M5 0.7 L9.3 3.1 V7.9 L5 10.3 L0.7 7.9 V3.1 Z M0.9 3.2 L5 5.5 L9.1 3.2 M5 5.5 V10.2" fill="none" stroke="#2a2a2a" stroke-width="0.95" stroke-linejoin="round"/></svg>
<svg class="a" style="left:841px;top:181px" width="10" height="11" viewBox="0 0 10 11"><path d="M5 0.7 L9.3 3.1 V7.9 L5 10.3 L0.7 7.9 V3.1 Z M0.9 3.2 L5 5.5 L9.1 3.2 M5 5.5 V10.2" fill="none" stroke="#2a2a2a" stroke-width="0.95" stroke-linejoin="round"/></svg>
<svg class="a" style="left:841px;top:194px" width="10" height="11" viewBox="0 0 10 11"><path d="M5 0.7 L9.3 3.1 V7.9 L5 10.3 L0.7 7.9 V3.1 Z M0.9 3.2 L5 5.5 L9.1 3.2 M5 5.5 V10.2" fill="none" stroke="#2a2a2a" stroke-width="0.95" stroke-linejoin="round"/></svg>
<svg class="a" style="left:841px;top:207px" width="10" height="11" viewBox="0 0 10 11"><path d="M5 0.7 L9.3 3.1 V7.9 L5 10.3 L0.7 7.9 V3.1 Z M0.9 3.2 L5 5.5 L9.1 3.2 M5 5.5 V10.2" fill="none" stroke="#2a2a2a" stroke-width="0.95" stroke-linejoin="round"/></svg>
<svg class="a" style="left:841px;top:220px" width="10" height="11" viewBox="0 0 10 11"><path d="M5 0.7 L9.3 3.1 V7.9 L5 10.3 L0.7 7.9 V3.1 Z M0.9 3.2 L5 5.5 L9.1 3.2 M5 5.5 V10.2" fill="none" stroke="#2a2a2a" stroke-width="0.95" stroke-linejoin="round"/></svg>
<svg class="a" style="left:841px;top:233px" width="10" height="11" viewBox="0 0 10 11"><path d="M5 0.7 L9.3 3.1 V7.9 L5 10.3 L0.7 7.9 V3.1 Z M0.9 3.2 L5 5.5 L9.1 3.2 M5 5.5 V10.2" fill="none" stroke="#2a2a2a" stroke-width="0.95" stroke-linejoin="round"/></svg>
<svg class="a" style="left:841px;top:246px" width="10" height="11" viewBox="0 0 10 11"><path d="M5 0.7 L9.3 3.1 V7.9 L5 10.3 L0.7 7.9 V3.1 Z M0.9 3.2 L5 5.5 L9.1 3.2 M5 5.5 V10.2" fill="none" stroke="#2a2a2a" stroke-width="0.95" stroke-linejoin="round"/></svg>
<div class="a" style="left:815.5px;top:261.9px;width:6px;height:6px;border:1px solid #a8a8a8;background:#f6f6f6"></div>
<div class="a" style="left:817.0px;top:264.4px;width:3px;height:1px;background:#4a6ab0"></div>
<svg class="a" style="left:827px;top:259.9px" width="11" height="10" viewBox="0 0 11 10"><path d="M1 2.5 H4 L5 3.5 H10 V9.5 H1 Z" fill="#b98b4c"/><rect x="1" y="4.2" width="9.5" height="1.3" fill="#e6d6b6"/><rect x="1" y="5.5" width="9.5" height="4" fill="#c49552"/><rect x="6" y="1.5" width="4" height="1.5" fill="#d8c8a8"/></svg>
<svg class="a" style="left:841px;top:272px" width="10" height="11" viewBox="0 0 10 11"><path d="M5 0.7 L9.3 3.1 V7.9 L5 10.3 L0.7 7.9 V3.1 Z M0.9 3.2 L5 5.5 L9.1 3.2 M5 5.5 V10.2" fill="none" stroke="#2a2a2a" stroke-width="0.95" stroke-linejoin="round"/></svg>
<svg class="a" style="left:841px;top:286px" width="10" height="11" viewBox="0 0 10 11"><path d="M5 0.7 L9.3 3.1 V7.9 L5 10.3 L0.7 7.9 V3.1 Z M0.9 3.2 L5 5.5 L9.1 3.2 M5 5.5 V10.2" fill="none" stroke="#2a2a2a" stroke-width="0.95" stroke-linejoin="round"/></svg>
<div class="a" style="left:815.5px;top:301.1px;width:6px;height:6px;border:1px solid #a8a8a8;background:#f6f6f6"></div>
<div class="a" style="left:817.0px;top:303.6px;width:3px;height:1px;background:#4a6ab0"></div>
<svg class="a" style="left:827px;top:299.1px" width="11" height="10" viewBox="0 0 11 10"><path d="M1 2.5 H4 L5 3.5 H10 V9.5 H1 Z" fill="#b98b4c"/><rect x="1" y="4.2" width="9.5" height="1.3" fill="#e6d6b6"/><rect x="1" y="5.5" width="9.5" height="4" fill="#c49552"/><rect x="6" y="1.5" width="4" height="1.5" fill="#d8c8a8"/></svg>
<svg class="a" style="left:841px;top:312px" width="10" height="11" viewBox="0 0 10 11"><path d="M5 0.7 L9.3 3.1 V7.9 L5 10.3 L0.7 7.9 V3.1 Z M0.9 3.2 L5 5.5 L9.1 3.2 M5 5.5 V10.2" fill="none" stroke="#2a2a2a" stroke-width="0.95" stroke-linejoin="round"/></svg>
<div class="a" style="left:0;top:548px;width:1000px;height:1px;background:#dcdcdc"></div>
<div class="a" style="left:181px;top:549px;width:1px;height:13px;background:#dcdcdc"></div>
<div class="a" style="left:299px;top:549px;width:1px;height:13px;background:#dcdcdc"></div>
<div class="a" style="left:416px;top:549px;width:1px;height:13px;background:#dcdcdc"></div>
<div class="a" style="left:534px;top:549px;width:1px;height:13px;background:#dcdcdc"></div>
<div class="a" style="left:651px;top:549px;width:1px;height:13px;background:#dcdcdc"></div>
<div class="a" style="left:0;top:562px;width:31px;height:1px;background:#000"></div>
<div class="a" style="left:255px;top:562px;width:745px;height:1px;background:#000"></div>
<div class="a" style="left:482px;top:562px;width:32px;height:1px;background:#777"></div>
<div class="a t" style="left:14.20px;top:3.18px;font-size:9.0px;line-height:9.0px;color:#222;transform:scaleX(0.8623);">Leadwerks Editor 4.5 - C:\Users\notebook\Documents\Leadwerks\Projects\simpleCar\Maps\simpleCar.map</div>
<div class="a t" style="left:8.80px;top:16.84px;font-size:8.7px;line-height:8.7px;color:#1c1828;transform:scaleX(0.7135);font-weight:normal">FILE</div>
<div class="a t" style="left:31.50px;top:16.84px;font-size:8.7px;line-height:8.7px;color:#1c1828;transform:scaleX(0.7577);font-weight:normal">EDIT</div>
<div class="a t" style="left:56.00px;top:16.84px;font-size:8.7px;line-height:8.7px;color:#1c1828;transform:scaleX(0.7882);font-weight:normal">VIEW</div>
<div class="a t" style="left:83.00px;top:16.84px;font-size:8.7px;line-height:8.7px;color:#1c1828;transform:scaleX(0.7851);font-weight:normal">TOOLS</div>
<div class="a t" style="left:115.50px;top:16.84px;font-size:8.7px;line-height:8.7px;color:#1c1828;transform:scaleX(0.7574);font-weight:normal">CREATE</div>
<div class="a t" style="left:151.00px;top:16.84px;font-size:8.7px;line-height:8.7px;color:#1c1828;transform:scaleX(0.7632);font-weight:normal">RENDER</div>
<div class="a t" style="left:188.00px;top:16.84px;font-size:8.7px;line-height:8.7px;color:#1c1828;transform:scaleX(0.8400);font-weight:normal">GAME</div>
<div class="a t" style="left:219.00px;top:16.84px;font-size:8.7px;line-height:8.7px;color:#1c1828;transform:scaleX(0.8131);font-weight:normal">WORKSHOP</div>
<div class="a t" style="left:270.00px;top:16.84px;font-size:8.7px;line-height:8.7px;color:#1c1828;transform:scaleX(0.7928);font-weight:normal">HELP</div>
<div class="a t" style="left:28.70px;top:48.57px;font-size:10.2px;line-height:10.2px;color:#e6eaee;transform:scaleX(0.8115);text-shadow:0.6px 0.6px 0.6px rgba(0,0,0,0.7)">Perspective</div>
<div class="a t" style="left:415.00px;top:48.27px;font-size:10.2px;line-height:10.2px;color:#e0e0e0;transform:scaleX(0.7792);text-shadow:0.6px 0.6px 0.6px rgba(0,0,0,0.7)">Top - XZ</div>
<div class="a t" style="left:29.00px;top:286.27px;font-size:10.2px;line-height:10.2px;color:#e0e0e0;transform:scaleX(0.7933);text-shadow:0.6px 0.6px 0.6px rgba(0,0,0,0.7)">Left - ZY</div>
<div class="a t" style="left:415.00px;top:286.27px;font-size:10.2px;line-height:10.2px;color:#e0e0e0;transform:scaleX(0.8168);text-shadow:0.6px 0.6px 0.6px rgba(0,0,0,0.7)">Back - XY</div>
<div class="a t" style="left:801.60px;top:50.05px;font-size:8.8px;line-height:8.8px;color:#141420;transform:scaleX(0.8683);">Objects</div>
<div class="a t" style="left:835.20px;top:50.05px;font-size:8.8px;line-height:8.8px;color:#141420;transform:scaleX(0.8256);">Assets</div>
<div class="a t" style="left:866.60px;top:48.95px;font-size:8.8px;line-height:8.8px;color:#141420;transform:scaleX(0.8175);">Scene</div>
<div class="a t" style="left:898.20px;top:50.15px;font-size:8.8px;line-height:8.8px;color:#141420;transform:scaleX(0.8479);">Terrain</div>
<div class="a t" style="left:826.30px;top:64.75px;font-size:8.8px;line-height:8.8px;color:#141420;transform:scaleX(0.8390);">Root</div>
<div class="a t" style="left:840.50px;top:77.80px;font-size:8.8px;line-height:8.8px;color:#fff;transform:scaleX(0.7753);">Car</div>
<div class="a t" style="left:853.80px;top:90.94px;font-size:8.7px;line-height:8.7px;color:#141420;transform:scaleX(0.8300);">CarBody1</div>
<div class="a t" style="left:853.80px;top:103.99px;font-size:8.7px;line-height:8.7px;color:#141420;transform:scaleX(0.8300);">HingeWheelFL</div>
<div class="a t" style="left:853.80px;top:117.04px;font-size:8.7px;line-height:8.7px;color:#141420;transform:scaleX(0.8300);">WheelFL</div>
<div class="a t" style="left:853.80px;top:130.09px;font-size:8.7px;line-height:8.7px;color:#141420;transform:scaleX(0.8300);">HingeWheelBL</div>
<div class="a t" style="left:853.80px;top:143.14px;font-size:8.7px;line-height:8.7px;color:#141420;transform:scaleX(0.8300);">WheelBL</div>
<div class="a t" style="left:853.80px;top:156.19px;font-size:8.7px;line-height:8.7px;color:#141420;transform:scaleX(0.8300);">HingeWheelBR</div>
<div class="a t" style="left:853.80px;top:169.24px;font-size:8.7px;line-height:8.7px;color:#141420;transform:scaleX(0.8300);">WheelBR</div>
<div class="a t" style="left:853.80px;top:182.29px;font-size:8.7px;line-height:8.7px;color:#141420;transform:scaleX(0.8300);">WheelSteerFL</div>
<div class="a t" style="left:853.80px;top:195.34px;font-size:8.7px;line-height:8.7px;color:#141420;transform:scaleX(0.8300);">SteerFL</div>
<div class="a t" style="left:853.80px;top:208.39px;font-size:8.7px;line-height:8.7px;color:#141420;transform:scaleX(0.8300);">HingeWheelFR</div>
<div class="a t" style="left:853.80px;top:221.44px;font-size:8.7px;line-height:8.7px;color:#141420;transform:scaleX(0.8300);">WheelFR</div>
<div class="a t" style="left:853.80px;top:234.49px;font-size:8.7px;line-height:8.7px;color:#141420;transform:scaleX(0.8300);">WheelSteerFR</div>
<div class="a t" style="left:853.80px;top:247.54px;font-size:8.7px;line-height:8.7px;color:#141420;transform:scaleX(0.8300);">SteerFR</div>
<div class="a t" style="left:839.80px;top:260.59px;font-size:8.7px;line-height:8.7px;color:#141420;transform:scaleX(0.8300);">Entities</div>
<div class="a t" style="left:853.80px;top:273.64px;font-size:8.7px;line-height:8.7px;color:#141420;transform:scaleX(0.8300);">Directional Light 2</div>
<div class="a t" style="left:853.80px;top:286.69px;font-size:8.7px;line-height:8.7px;color:#141420;transform:scaleX(0.8300);">Camera 2</div>
<div class="a t" style="left:839.80px;top:299.74px;font-size:8.7px;line-height:8.7px;color:#141420;transform:scaleX(0.8300);">Brushes</div>
<div class="a t" style="left:853.80px;top:312.79px;font-size:8.7px;line-height:8.7px;color:#141420;transform:scaleX(0.8300);">Floor</div>
<div class="a t" style="left:2.00px;top:551.96px;font-size:8.2px;line-height:8.2px;color:#141420;transform:scaleX(0.8791);">Press F1 for Help</div>
</body></html>
